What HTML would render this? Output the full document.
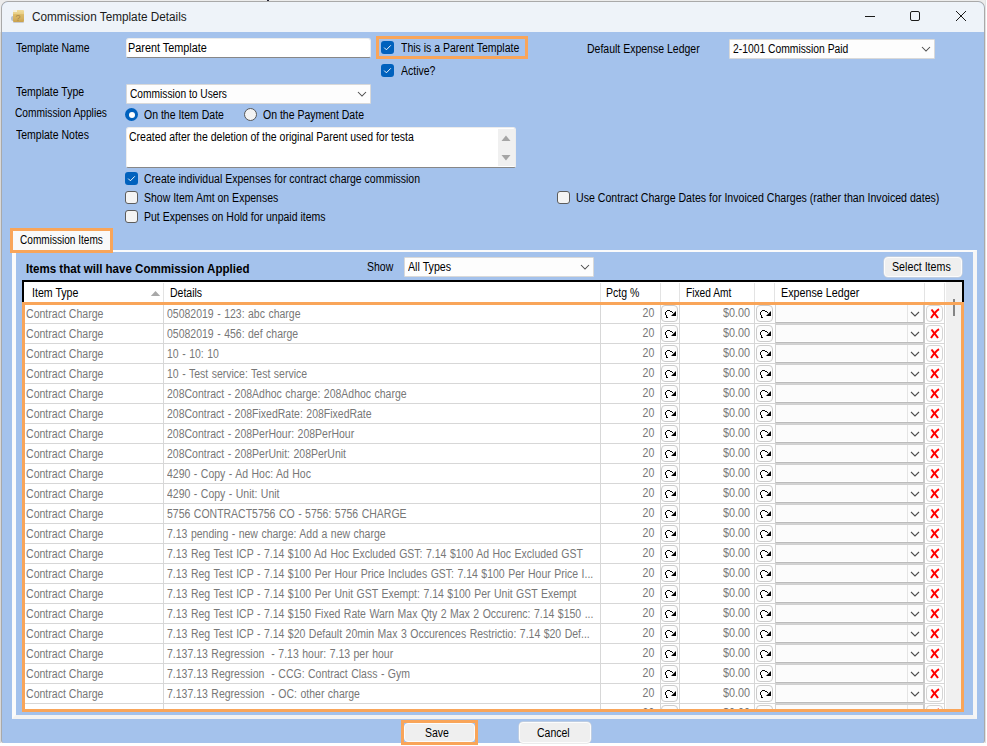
<!DOCTYPE html>
<html><head><meta charset="utf-8"><style>
html,body{margin:0;padding:0}
body{width:987px;height:746px;position:relative;overflow:hidden;background:#ececec;font-family:"Liberation Sans",sans-serif}
.t{position:absolute;white-space:nowrap;transform-origin:left top}
</style></head><body>

<div style="position:absolute;left:0px;top:32px;width:1px;height:711px;box-sizing:border-box;background:#d9d9d9"></div>
<div style="position:absolute;left:985px;top:0px;width:1px;height:746px;box-sizing:border-box;background:#e2e2e2"></div>
<div style="position:absolute;left:986px;top:0px;width:1px;height:746px;box-sizing:border-box;background:#fff"></div>
<div style="position:absolute;left:0px;top:743px;width:987px;height:3px;box-sizing:border-box;background:#fff"></div>
<div style="position:absolute;left:1px;top:1px;width:984px;height:742px;box-sizing:border-box;border:1px solid #a9a9a9;border-bottom:none;border-radius:7px 7px 3px 3px;overflow:hidden;background:#a4c2ec">
<div style="position:absolute;left:0;top:0;width:982px;height:30px;background:#eef3f9"></div>
</div>
<div style="position:absolute;left:11px;top:16px;width:3px;height:5px;border-radius:2px 0 0 2px;background:#b9c2cf"></div>
<div style="position:absolute;left:13px;top:10px;width:11px;height:12px;border-radius:1px;background:linear-gradient(#f1dd9f 0,#e8cf86 33%,#dcbb68 38%,#d6b260 70%,#c9a24e 100%);box-shadow:0 1px 0 #c8ccd4"></div>
<div style="position:absolute;left:13px;top:10px;width:4px;height:2px;background:#f6f0dc"></div>
<div style="position:absolute;left:15.5px;top:13.5px;font-size:9px;line-height:9px;color:#a8884a;font-family:Liberation Sans">?</div>
<div class="t" style="left:32px;top:10.84px;font-size:12px;line-height:12px;color:#1b1b1b;font-weight:normal;transform:scaleX(0.98);">Commission Template Details</div>
<div style="position:absolute;left:267px;top:0px;width:2px;height:1px;box-sizing:border-box;background:#223"></div>
<div style="position:absolute;left:865px;top:16px;width:10px;height:1px;box-sizing:border-box;background:#1a1a1a"></div>
<div style="position:absolute;left:910px;top:11px;width:10px;height:10px;box-sizing:border-box;border:1px solid #1a1a1a;border-radius:2px"></div>
<svg style="position:absolute;left:955px;top:10px" width="12" height="12" viewBox="0 0 12 12"><path d="M1 1 L11 11 M11 1 L1 11" stroke="#1a1a1a" stroke-width="1"/></svg>
<div class="t" style="left:16px;top:41.84px;font-size:12px;line-height:12px;color:#000;font-weight:normal;transform:scaleX(0.875);">Template Name</div>
<div style="position:absolute;left:126px;top:38px;width:245px;height:20px;box-sizing:border-box;background:#fff;border:1px solid #ececec;border-bottom:1px solid #878787;border-radius:3px 3px 2px 2px"></div>
<div class="t" style="left:128px;top:41.84px;font-size:12px;line-height:12px;color:#000;font-weight:normal;transform:scaleX(0.905);">Parent Template</div>
<div style="position:absolute;left:376px;top:36px;width:152px;height:23px;box-sizing:border-box;border:3px solid #f9a559"></div>
<div style="position:absolute;left:381px;top:41px;width:13px;height:13px;border-radius:3px;background:#0061bd"><svg width="13" height="13" viewBox="0 0 13 13" style="position:absolute;left:0;top:0"><path d="M3.2 6.6 L5.4 8.8 L9.8 4.3" fill="none" stroke="#fff" stroke-width="0.95"/></svg></div>
<div class="t" style="left:400.5px;top:41.84px;font-size:12px;line-height:12px;color:#000;font-weight:normal;transform:scaleX(0.875);">This is a Parent Template</div>
<div style="position:absolute;left:381px;top:64px;width:13px;height:13px;border-radius:3px;background:#0061bd"><svg width="13" height="13" viewBox="0 0 13 13" style="position:absolute;left:0;top:0"><path d="M3.2 6.6 L5.4 8.8 L9.8 4.3" fill="none" stroke="#fff" stroke-width="0.95"/></svg></div>
<div class="t" style="left:400.5px;top:64.84px;font-size:12px;line-height:12px;color:#000;font-weight:normal;transform:scaleX(0.875);">Active?</div>
<div class="t" style="left:586.8px;top:42.84px;font-size:12px;line-height:12px;color:#000;font-weight:normal;transform:scaleX(0.875);">Default Expense Ledger</div>
<div style="position:absolute;left:729px;top:39px;width:206px;height:20px;box-sizing:border-box;background:#fdfdfd;border:1px solid #d9d9d9;border-radius:1px"></div>
<div class="t" style="left:733px;top:42.84px;font-size:12px;line-height:12px;color:#000;font-weight:normal;transform:scaleX(0.86);">2-1001 Commission Paid</div>
<svg style="position:absolute;left:921px;top:46px" width="10" height="6" viewBox="0 0 10 6"><path d="M1 1 L5 5 L9 1" fill="none" stroke="#4a4a4a" stroke-width="1.05"/></svg>
<div class="t" style="left:16px;top:85.84px;font-size:12px;line-height:12px;color:#000;font-weight:normal;transform:scaleX(0.875);">Template Type</div>
<div style="position:absolute;left:126px;top:84px;width:245px;height:20px;box-sizing:border-box;background:#fdfdfd;border:1px solid #d9d9d9;border-radius:1px"></div>
<div class="t" style="left:129.5px;top:88.24px;font-size:12px;line-height:12px;color:#000;font-weight:normal;transform:scaleX(0.85);">Commission to Users</div>
<svg style="position:absolute;left:357px;top:91px" width="10" height="6" viewBox="0 0 10 6"><path d="M1 1 L5 5 L9 1" fill="none" stroke="#4a4a4a" stroke-width="1.05"/></svg>
<div class="t" style="left:15.3px;top:106.84px;font-size:12px;line-height:12px;color:#000;font-weight:normal;transform:scaleX(0.851);">Commission Applies</div>
<div style="position:absolute;left:125px;top:108px;width:13px;height:13px;border-radius:50%;background:#0061bd"></div>
<div style="position:absolute;left:128.5px;top:111.5px;width:6px;height:6px;border-radius:50%;background:#fff"></div>
<div class="t" style="left:143.5px;top:108.84px;font-size:12px;line-height:12px;color:#000;font-weight:normal;transform:scaleX(0.875);">On the Item Date</div>
<div style="position:absolute;left:244px;top:108px;width:13px;height:13px;box-sizing:border-box;border-radius:50%;background:#f3f3f3;border:1px solid #575757"></div>
<div class="t" style="left:262.5px;top:108.84px;font-size:12px;line-height:12px;color:#000;font-weight:normal;transform:scaleX(0.875);">On the Payment Date</div>
<div class="t" style="left:16px;top:128.84px;font-size:12px;line-height:12px;color:#000;font-weight:normal;transform:scaleX(0.875);">Template Notes</div>
<div style="position:absolute;left:126px;top:127px;width:390px;height:41px;box-sizing:border-box;background:#fff;border:1px solid #ececec;border-bottom:1px solid #878787;border-radius:3px 3px 2px 2px"></div>
<div class="t" style="left:129px;top:130.84px;font-size:12px;line-height:12px;color:#000;font-weight:normal;transform:scaleX(0.875);">Created after the deletion of the original Parent used for testa</div>
<div style="position:absolute;left:498px;top:129px;width:17px;height:37px;box-sizing:border-box;background:#f0f0f0"></div>
<svg style="position:absolute;left:501px;top:134px" width="10" height="8" viewBox="0 0 10 8"><path d="M0.5 7 L5 1.5 L9.5 7 Z" fill="#a5a5a5"/></svg>
<svg style="position:absolute;left:501px;top:154px" width="10" height="8" viewBox="0 0 10 8"><path d="M0.5 1 L5 6.5 L9.5 1 Z" fill="#a5a5a5"/></svg>
<div style="position:absolute;left:125px;top:172px;width:13px;height:13px;border-radius:3px;background:#0061bd"><svg width="13" height="13" viewBox="0 0 13 13" style="position:absolute;left:0;top:0"><path d="M3.2 6.6 L5.4 8.8 L9.8 4.3" fill="none" stroke="#fff" stroke-width="0.95"/></svg></div>
<div class="t" style="left:143.5px;top:172.84px;font-size:12px;line-height:12px;color:#000;font-weight:normal;transform:scaleX(0.875);">Create individual Expenses for contract charge commission</div>
<div style="position:absolute;left:125px;top:191px;width:13px;height:13px;box-sizing:border-box;border-radius:3px;background:#f4f4f4;border:1px solid #5c5c5c"></div>
<div class="t" style="left:143.5px;top:191.84px;font-size:12px;line-height:12px;color:#000;font-weight:normal;transform:scaleX(0.875);">Show Item Amt on Expenses</div>
<div style="position:absolute;left:125px;top:210px;width:13px;height:13px;box-sizing:border-box;border-radius:3px;background:#f4f4f4;border:1px solid #5c5c5c"></div>
<div class="t" style="left:143.5px;top:210.84px;font-size:12px;line-height:12px;color:#000;font-weight:normal;transform:scaleX(0.875);">Put Expenses on Hold for unpaid items</div>
<div style="position:absolute;left:557px;top:191px;width:13px;height:13px;box-sizing:border-box;border-radius:3px;background:#f4f4f4;border:1px solid #5c5c5c"></div>
<div class="t" style="left:576.3px;top:191.84px;font-size:12px;line-height:12px;color:#000;font-weight:normal;transform:scaleX(0.883);">Use Contract Charge Dates for Invoiced Charges (rather than Invoiced dates)</div>
<div style="position:absolute;left:12px;top:250px;width:965px;height:469px;box-sizing:border-box;border-top:2px solid #fbfbfb;border-left:4px solid #fbfbfb;border-right:4px solid #f6f6f6;border-bottom:4px solid #f3f3f3"></div>
<div style="position:absolute;left:10px;top:228px;width:103px;height:25px;box-sizing:border-box;background:#f9f9f9;border:3px solid #f9a559"></div>
<div class="t" style="left:19.5px;top:233.84px;font-size:12px;line-height:12px;color:#000;font-weight:normal;transform:scaleX(0.84);">Commission Items</div>
<div class="t" style="left:25.5px;top:262.84px;font-size:12px;line-height:12px;color:#000;font-weight:bold;transform:scaleX(0.962);">Items that will have Commission Applied</div>
<div class="t" style="left:367px;top:260.84px;font-size:12px;line-height:12px;color:#000;font-weight:normal;transform:scaleX(0.875);">Show</div>
<div style="position:absolute;left:404px;top:257px;width:190px;height:20px;box-sizing:border-box;background:#fdfdfd;border:1px solid #d9d9d9;border-radius:1px"></div>
<div class="t" style="left:408px;top:260.84px;font-size:12px;line-height:12px;color:#000;font-weight:normal;transform:scaleX(0.89);">All Types</div>
<svg style="position:absolute;left:580px;top:264px" width="10" height="6" viewBox="0 0 10 6"><path d="M1 1 L5 5 L9 1" fill="none" stroke="#4a4a4a" stroke-width="1.05"/></svg>
<div style="position:absolute;left:884px;top:257px;width:78px;height:20px;box-sizing:border-box;background:#efefef;border:1px solid #fcfcfc;box-shadow:0 0 0 0.5px #d8d8d8;border-radius:4px"></div>
<div class="t" style="left:892.2px;top:260.84px;font-size:12px;line-height:12px;color:#000;font-weight:normal;transform:scaleX(0.89);">Select Items</div>
<div style="position:absolute;left:22px;top:280px;width:942px;height:432px;box-sizing:border-box;background:#fff;border:2px solid #000;border-bottom:none"></div>
<div style="position:absolute;left:946px;top:282px;width:16px;height:428px;box-sizing:border-box;background:#f0f0f0"></div>
<div style="position:absolute;left:953px;top:299px;width:2px;height:17px;box-sizing:border-box;background:#858585"></div>
<div style="position:absolute;left:163px;top:283px;width:1px;height:19px;box-sizing:border-box;background:#e3e3e3"></div>
<div style="position:absolute;left:600px;top:283px;width:1px;height:19px;box-sizing:border-box;background:#e3e3e3"></div>
<div style="position:absolute;left:660px;top:283px;width:1px;height:19px;box-sizing:border-box;background:#e3e3e3"></div>
<div style="position:absolute;left:679px;top:283px;width:1px;height:19px;box-sizing:border-box;background:#e3e3e3"></div>
<div style="position:absolute;left:754px;top:283px;width:1px;height:19px;box-sizing:border-box;background:#e3e3e3"></div>
<div style="position:absolute;left:774px;top:283px;width:1px;height:19px;box-sizing:border-box;background:#e3e3e3"></div>
<div style="position:absolute;left:924px;top:283px;width:1px;height:19px;box-sizing:border-box;background:#e3e3e3"></div>
<div style="position:absolute;left:944px;top:283px;width:1px;height:19px;box-sizing:border-box;background:#e3e3e3"></div>
<div class="t" style="left:32.1px;top:286.84px;font-size:12px;line-height:12px;color:#000;font-weight:normal;transform:scaleX(0.885);">Item Type</div>
<svg style="position:absolute;left:150px;top:290px" width="11" height="7" viewBox="0 0 11 7"><path d="M0.8 6 L5.5 1 L10.2 6 Z" fill="#a8a8a8"/></svg>
<div class="t" style="left:170px;top:286.84px;font-size:12px;line-height:12px;color:#000;font-weight:normal;transform:scaleX(0.875);">Details</div>
<div class="t" style="left:606.2px;top:286.84px;font-size:12px;line-height:12px;color:#000;font-weight:normal;transform:scaleX(0.875);">Pctg %</div>
<div class="t" style="left:686.3px;top:286.84px;font-size:12px;line-height:12px;color:#000;font-weight:normal;transform:scaleX(0.85);">Fixed Amt</div>
<div class="t" style="left:781.1px;top:286.84px;font-size:12px;line-height:12px;color:#000;font-weight:normal;transform:scaleX(0.895);">Expense Ledger</div>
<div style="position:absolute;left:0;top:0;width:987px;height:746px;clip-path:inset(302px 24px 37px 24px)">
<div style="position:absolute;left:24px;top:323px;width:921px;height:1px;box-sizing:border-box;background:#d7d7d7"></div>
<div style="position:absolute;left:163px;top:303px;width:1px;height:20px;box-sizing:border-box;background:#d7d7d7"></div>
<div style="position:absolute;left:600px;top:303px;width:1px;height:20px;box-sizing:border-box;background:#d7d7d7"></div>
<div style="position:absolute;left:660px;top:303px;width:1px;height:20px;box-sizing:border-box;background:#d7d7d7"></div>
<div style="position:absolute;left:679px;top:303px;width:1px;height:20px;box-sizing:border-box;background:#d7d7d7"></div>
<div style="position:absolute;left:754px;top:303px;width:1px;height:20px;box-sizing:border-box;background:#d7d7d7"></div>
<div style="position:absolute;left:944px;top:303px;width:1px;height:20px;box-sizing:border-box;background:#d7d7d7"></div>
<div style="position:absolute;left:775px;top:304px;width:150px;height:19px;box-sizing:border-box;background:#fcfcfc;border-top:1px solid #d0d0d0;border-bottom:1px solid #bcbcbc;border-left:1px solid #d4d4d4;border-right:2px solid #cbcbcb"></div>
<div style="position:absolute;left:776px;top:321px;width:147px;height:1px;box-sizing:border-box;background:#fff"></div>
<div style="position:absolute;left:775px;top:323px;width:150px;height:1px;box-sizing:border-box;background:#d3d3d3"></div>
<div style="position:absolute;left:907px;top:305px;width:1px;height:17px;box-sizing:border-box;background:#e4e4e4"></div>
<svg style="position:absolute;left:910px;top:311px" width="10" height="6" viewBox="0 0 10 6"><path d="M1 1 L5 5 L9 1" fill="none" stroke="#4e4e4e" stroke-width="1.1"/></svg>
<div class="t" style="left:26.3px;top:308.14px;font-size:12px;line-height:12px;color:#777777;font-weight:normal;transform:scaleX(0.88);">Contract Charge</div>
<div class="t" style="left:166.9px;top:308.14px;font-size:12px;line-height:12px;color:#777777;font-weight:normal;transform:scaleX(0.874);word-spacing:0.66px">05082019 - 123: abc charge</div>
<div class="t" style="right:332.20000000000005px;top:307.44px;font-size:12px;line-height:12px;color:#777777;font-weight:normal;transform:scaleX(0.88);transform-origin:right top;">20</div>
<div class="t" style="right:237px;top:307.44px;font-size:12px;line-height:12px;color:#777777;font-weight:normal;transform:scaleX(0.9);transform-origin:right top;">$0.00</div>
<div style="position:absolute;left:661px;top:305px;width:17px;height:17px;box-sizing:border-box;border:1px solid #cbcbcb;border-radius:4px;background:#fdfdfd"><div style="position:absolute;left:-1px;top:-1px;width:17px;height:17px"><svg width="17" height="17" viewBox="0 0 17 17" style="position:absolute;left:0;top:0" shape-rendering="crispEdges"><rect x="6" y="5" width="3" height="1"/><rect x="5" y="6" width="1" height="1"/><rect x="4" y="7" width="1" height="3"/><rect x="5" y="10" width="1" height="3"/><rect x="6" y="12" width="1" height="1"/><rect x="9" y="6" width="2" height="1"/><rect x="11" y="7" width="1" height="1"/><polygon points="10,11 15,11 15,6" shape-rendering="auto"/></svg></div></div>
<div style="position:absolute;left:756px;top:305px;width:17px;height:17px;box-sizing:border-box;border:1px solid #cbcbcb;border-radius:4px;background:#fdfdfd"><div style="position:absolute;left:-1px;top:-1px;width:17px;height:17px"><svg width="17" height="17" viewBox="0 0 17 17" style="position:absolute;left:0;top:0" shape-rendering="crispEdges"><rect x="6" y="5" width="3" height="1"/><rect x="5" y="6" width="1" height="1"/><rect x="4" y="7" width="1" height="3"/><rect x="5" y="10" width="1" height="3"/><rect x="6" y="12" width="1" height="1"/><rect x="9" y="6" width="2" height="1"/><rect x="11" y="7" width="1" height="1"/><polygon points="10,11 15,11 15,6" shape-rendering="auto"/></svg></div></div>
<div style="position:absolute;left:926px;top:305px;width:17px;height:17px;box-sizing:border-box;border:1px solid #d4d4d4;border-radius:4px;background:#fdfdfd"><svg width="17" height="17" viewBox="0 0 17 17" style="position:absolute;left:-1px;top:-1px"><path d="M5 13 C7 10 10 6 13 4.2" fill="none" stroke="#f00" stroke-width="2"/><path d="M5.5 4.5 C7.5 7 10 10 12 13" fill="none" stroke="#f00" stroke-width="2"/></svg></div>
<div style="position:absolute;left:24px;top:343px;width:921px;height:1px;box-sizing:border-box;background:#d7d7d7"></div>
<div style="position:absolute;left:163px;top:323px;width:1px;height:20px;box-sizing:border-box;background:#d7d7d7"></div>
<div style="position:absolute;left:600px;top:323px;width:1px;height:20px;box-sizing:border-box;background:#d7d7d7"></div>
<div style="position:absolute;left:660px;top:323px;width:1px;height:20px;box-sizing:border-box;background:#d7d7d7"></div>
<div style="position:absolute;left:679px;top:323px;width:1px;height:20px;box-sizing:border-box;background:#d7d7d7"></div>
<div style="position:absolute;left:754px;top:323px;width:1px;height:20px;box-sizing:border-box;background:#d7d7d7"></div>
<div style="position:absolute;left:944px;top:323px;width:1px;height:20px;box-sizing:border-box;background:#d7d7d7"></div>
<div style="position:absolute;left:775px;top:324px;width:150px;height:19px;box-sizing:border-box;background:#fcfcfc;border-top:1px solid #d0d0d0;border-bottom:1px solid #bcbcbc;border-left:1px solid #d4d4d4;border-right:2px solid #cbcbcb"></div>
<div style="position:absolute;left:776px;top:341px;width:147px;height:1px;box-sizing:border-box;background:#fff"></div>
<div style="position:absolute;left:775px;top:343px;width:150px;height:1px;box-sizing:border-box;background:#d3d3d3"></div>
<div style="position:absolute;left:907px;top:325px;width:1px;height:17px;box-sizing:border-box;background:#e4e4e4"></div>
<svg style="position:absolute;left:910px;top:331px" width="10" height="6" viewBox="0 0 10 6"><path d="M1 1 L5 5 L9 1" fill="none" stroke="#4e4e4e" stroke-width="1.1"/></svg>
<div class="t" style="left:26.3px;top:328.14px;font-size:12px;line-height:12px;color:#777777;font-weight:normal;transform:scaleX(0.88);">Contract Charge</div>
<div class="t" style="left:166.9px;top:328.14px;font-size:12px;line-height:12px;color:#777777;font-weight:normal;transform:scaleX(0.874);word-spacing:0.66px">05082019 - 456: def charge</div>
<div class="t" style="right:332.20000000000005px;top:327.44px;font-size:12px;line-height:12px;color:#777777;font-weight:normal;transform:scaleX(0.88);transform-origin:right top;">20</div>
<div class="t" style="right:237px;top:327.44px;font-size:12px;line-height:12px;color:#777777;font-weight:normal;transform:scaleX(0.9);transform-origin:right top;">$0.00</div>
<div style="position:absolute;left:661px;top:325px;width:17px;height:17px;box-sizing:border-box;border:1px solid #cbcbcb;border-radius:4px;background:#fdfdfd"><div style="position:absolute;left:-1px;top:-1px;width:17px;height:17px"><svg width="17" height="17" viewBox="0 0 17 17" style="position:absolute;left:0;top:0" shape-rendering="crispEdges"><rect x="6" y="5" width="3" height="1"/><rect x="5" y="6" width="1" height="1"/><rect x="4" y="7" width="1" height="3"/><rect x="5" y="10" width="1" height="3"/><rect x="6" y="12" width="1" height="1"/><rect x="9" y="6" width="2" height="1"/><rect x="11" y="7" width="1" height="1"/><polygon points="10,11 15,11 15,6" shape-rendering="auto"/></svg></div></div>
<div style="position:absolute;left:756px;top:325px;width:17px;height:17px;box-sizing:border-box;border:1px solid #cbcbcb;border-radius:4px;background:#fdfdfd"><div style="position:absolute;left:-1px;top:-1px;width:17px;height:17px"><svg width="17" height="17" viewBox="0 0 17 17" style="position:absolute;left:0;top:0" shape-rendering="crispEdges"><rect x="6" y="5" width="3" height="1"/><rect x="5" y="6" width="1" height="1"/><rect x="4" y="7" width="1" height="3"/><rect x="5" y="10" width="1" height="3"/><rect x="6" y="12" width="1" height="1"/><rect x="9" y="6" width="2" height="1"/><rect x="11" y="7" width="1" height="1"/><polygon points="10,11 15,11 15,6" shape-rendering="auto"/></svg></div></div>
<div style="position:absolute;left:926px;top:325px;width:17px;height:17px;box-sizing:border-box;border:1px solid #d4d4d4;border-radius:4px;background:#fdfdfd"><svg width="17" height="17" viewBox="0 0 17 17" style="position:absolute;left:-1px;top:-1px"><path d="M5 13 C7 10 10 6 13 4.2" fill="none" stroke="#f00" stroke-width="2"/><path d="M5.5 4.5 C7.5 7 10 10 12 13" fill="none" stroke="#f00" stroke-width="2"/></svg></div>
<div style="position:absolute;left:24px;top:363px;width:921px;height:1px;box-sizing:border-box;background:#d7d7d7"></div>
<div style="position:absolute;left:163px;top:343px;width:1px;height:20px;box-sizing:border-box;background:#d7d7d7"></div>
<div style="position:absolute;left:600px;top:343px;width:1px;height:20px;box-sizing:border-box;background:#d7d7d7"></div>
<div style="position:absolute;left:660px;top:343px;width:1px;height:20px;box-sizing:border-box;background:#d7d7d7"></div>
<div style="position:absolute;left:679px;top:343px;width:1px;height:20px;box-sizing:border-box;background:#d7d7d7"></div>
<div style="position:absolute;left:754px;top:343px;width:1px;height:20px;box-sizing:border-box;background:#d7d7d7"></div>
<div style="position:absolute;left:944px;top:343px;width:1px;height:20px;box-sizing:border-box;background:#d7d7d7"></div>
<div style="position:absolute;left:775px;top:344px;width:150px;height:19px;box-sizing:border-box;background:#fcfcfc;border-top:1px solid #d0d0d0;border-bottom:1px solid #bcbcbc;border-left:1px solid #d4d4d4;border-right:2px solid #cbcbcb"></div>
<div style="position:absolute;left:776px;top:361px;width:147px;height:1px;box-sizing:border-box;background:#fff"></div>
<div style="position:absolute;left:775px;top:363px;width:150px;height:1px;box-sizing:border-box;background:#d3d3d3"></div>
<div style="position:absolute;left:907px;top:345px;width:1px;height:17px;box-sizing:border-box;background:#e4e4e4"></div>
<svg style="position:absolute;left:910px;top:351px" width="10" height="6" viewBox="0 0 10 6"><path d="M1 1 L5 5 L9 1" fill="none" stroke="#4e4e4e" stroke-width="1.1"/></svg>
<div class="t" style="left:26.3px;top:348.14px;font-size:12px;line-height:12px;color:#777777;font-weight:normal;transform:scaleX(0.88);">Contract Charge</div>
<div class="t" style="left:166.9px;top:348.14px;font-size:12px;line-height:12px;color:#777777;font-weight:normal;transform:scaleX(0.874);word-spacing:0.66px">10 - 10: 10</div>
<div class="t" style="right:332.20000000000005px;top:347.44px;font-size:12px;line-height:12px;color:#777777;font-weight:normal;transform:scaleX(0.88);transform-origin:right top;">20</div>
<div class="t" style="right:237px;top:347.44px;font-size:12px;line-height:12px;color:#777777;font-weight:normal;transform:scaleX(0.9);transform-origin:right top;">$0.00</div>
<div style="position:absolute;left:661px;top:345px;width:17px;height:17px;box-sizing:border-box;border:1px solid #cbcbcb;border-radius:4px;background:#fdfdfd"><div style="position:absolute;left:-1px;top:-1px;width:17px;height:17px"><svg width="17" height="17" viewBox="0 0 17 17" style="position:absolute;left:0;top:0" shape-rendering="crispEdges"><rect x="6" y="5" width="3" height="1"/><rect x="5" y="6" width="1" height="1"/><rect x="4" y="7" width="1" height="3"/><rect x="5" y="10" width="1" height="3"/><rect x="6" y="12" width="1" height="1"/><rect x="9" y="6" width="2" height="1"/><rect x="11" y="7" width="1" height="1"/><polygon points="10,11 15,11 15,6" shape-rendering="auto"/></svg></div></div>
<div style="position:absolute;left:756px;top:345px;width:17px;height:17px;box-sizing:border-box;border:1px solid #cbcbcb;border-radius:4px;background:#fdfdfd"><div style="position:absolute;left:-1px;top:-1px;width:17px;height:17px"><svg width="17" height="17" viewBox="0 0 17 17" style="position:absolute;left:0;top:0" shape-rendering="crispEdges"><rect x="6" y="5" width="3" height="1"/><rect x="5" y="6" width="1" height="1"/><rect x="4" y="7" width="1" height="3"/><rect x="5" y="10" width="1" height="3"/><rect x="6" y="12" width="1" height="1"/><rect x="9" y="6" width="2" height="1"/><rect x="11" y="7" width="1" height="1"/><polygon points="10,11 15,11 15,6" shape-rendering="auto"/></svg></div></div>
<div style="position:absolute;left:926px;top:345px;width:17px;height:17px;box-sizing:border-box;border:1px solid #d4d4d4;border-radius:4px;background:#fdfdfd"><svg width="17" height="17" viewBox="0 0 17 17" style="position:absolute;left:-1px;top:-1px"><path d="M5 13 C7 10 10 6 13 4.2" fill="none" stroke="#f00" stroke-width="2"/><path d="M5.5 4.5 C7.5 7 10 10 12 13" fill="none" stroke="#f00" stroke-width="2"/></svg></div>
<div style="position:absolute;left:24px;top:383px;width:921px;height:1px;box-sizing:border-box;background:#d7d7d7"></div>
<div style="position:absolute;left:163px;top:363px;width:1px;height:20px;box-sizing:border-box;background:#d7d7d7"></div>
<div style="position:absolute;left:600px;top:363px;width:1px;height:20px;box-sizing:border-box;background:#d7d7d7"></div>
<div style="position:absolute;left:660px;top:363px;width:1px;height:20px;box-sizing:border-box;background:#d7d7d7"></div>
<div style="position:absolute;left:679px;top:363px;width:1px;height:20px;box-sizing:border-box;background:#d7d7d7"></div>
<div style="position:absolute;left:754px;top:363px;width:1px;height:20px;box-sizing:border-box;background:#d7d7d7"></div>
<div style="position:absolute;left:944px;top:363px;width:1px;height:20px;box-sizing:border-box;background:#d7d7d7"></div>
<div style="position:absolute;left:775px;top:364px;width:150px;height:19px;box-sizing:border-box;background:#fcfcfc;border-top:1px solid #d0d0d0;border-bottom:1px solid #bcbcbc;border-left:1px solid #d4d4d4;border-right:2px solid #cbcbcb"></div>
<div style="position:absolute;left:776px;top:381px;width:147px;height:1px;box-sizing:border-box;background:#fff"></div>
<div style="position:absolute;left:775px;top:383px;width:150px;height:1px;box-sizing:border-box;background:#d3d3d3"></div>
<div style="position:absolute;left:907px;top:365px;width:1px;height:17px;box-sizing:border-box;background:#e4e4e4"></div>
<svg style="position:absolute;left:910px;top:371px" width="10" height="6" viewBox="0 0 10 6"><path d="M1 1 L5 5 L9 1" fill="none" stroke="#4e4e4e" stroke-width="1.1"/></svg>
<div class="t" style="left:26.3px;top:368.14px;font-size:12px;line-height:12px;color:#777777;font-weight:normal;transform:scaleX(0.88);">Contract Charge</div>
<div class="t" style="left:166.9px;top:368.14px;font-size:12px;line-height:12px;color:#777777;font-weight:normal;transform:scaleX(0.874);word-spacing:0.66px">10 - Test service: Test service</div>
<div class="t" style="right:332.20000000000005px;top:367.44px;font-size:12px;line-height:12px;color:#777777;font-weight:normal;transform:scaleX(0.88);transform-origin:right top;">20</div>
<div class="t" style="right:237px;top:367.44px;font-size:12px;line-height:12px;color:#777777;font-weight:normal;transform:scaleX(0.9);transform-origin:right top;">$0.00</div>
<div style="position:absolute;left:661px;top:365px;width:17px;height:17px;box-sizing:border-box;border:1px solid #cbcbcb;border-radius:4px;background:#fdfdfd"><div style="position:absolute;left:-1px;top:-1px;width:17px;height:17px"><svg width="17" height="17" viewBox="0 0 17 17" style="position:absolute;left:0;top:0" shape-rendering="crispEdges"><rect x="6" y="5" width="3" height="1"/><rect x="5" y="6" width="1" height="1"/><rect x="4" y="7" width="1" height="3"/><rect x="5" y="10" width="1" height="3"/><rect x="6" y="12" width="1" height="1"/><rect x="9" y="6" width="2" height="1"/><rect x="11" y="7" width="1" height="1"/><polygon points="10,11 15,11 15,6" shape-rendering="auto"/></svg></div></div>
<div style="position:absolute;left:756px;top:365px;width:17px;height:17px;box-sizing:border-box;border:1px solid #cbcbcb;border-radius:4px;background:#fdfdfd"><div style="position:absolute;left:-1px;top:-1px;width:17px;height:17px"><svg width="17" height="17" viewBox="0 0 17 17" style="position:absolute;left:0;top:0" shape-rendering="crispEdges"><rect x="6" y="5" width="3" height="1"/><rect x="5" y="6" width="1" height="1"/><rect x="4" y="7" width="1" height="3"/><rect x="5" y="10" width="1" height="3"/><rect x="6" y="12" width="1" height="1"/><rect x="9" y="6" width="2" height="1"/><rect x="11" y="7" width="1" height="1"/><polygon points="10,11 15,11 15,6" shape-rendering="auto"/></svg></div></div>
<div style="position:absolute;left:926px;top:365px;width:17px;height:17px;box-sizing:border-box;border:1px solid #d4d4d4;border-radius:4px;background:#fdfdfd"><svg width="17" height="17" viewBox="0 0 17 17" style="position:absolute;left:-1px;top:-1px"><path d="M5 13 C7 10 10 6 13 4.2" fill="none" stroke="#f00" stroke-width="2"/><path d="M5.5 4.5 C7.5 7 10 10 12 13" fill="none" stroke="#f00" stroke-width="2"/></svg></div>
<div style="position:absolute;left:24px;top:403px;width:921px;height:1px;box-sizing:border-box;background:#d7d7d7"></div>
<div style="position:absolute;left:163px;top:383px;width:1px;height:20px;box-sizing:border-box;background:#d7d7d7"></div>
<div style="position:absolute;left:600px;top:383px;width:1px;height:20px;box-sizing:border-box;background:#d7d7d7"></div>
<div style="position:absolute;left:660px;top:383px;width:1px;height:20px;box-sizing:border-box;background:#d7d7d7"></div>
<div style="position:absolute;left:679px;top:383px;width:1px;height:20px;box-sizing:border-box;background:#d7d7d7"></div>
<div style="position:absolute;left:754px;top:383px;width:1px;height:20px;box-sizing:border-box;background:#d7d7d7"></div>
<div style="position:absolute;left:944px;top:383px;width:1px;height:20px;box-sizing:border-box;background:#d7d7d7"></div>
<div style="position:absolute;left:775px;top:384px;width:150px;height:19px;box-sizing:border-box;background:#fcfcfc;border-top:1px solid #d0d0d0;border-bottom:1px solid #bcbcbc;border-left:1px solid #d4d4d4;border-right:2px solid #cbcbcb"></div>
<div style="position:absolute;left:776px;top:401px;width:147px;height:1px;box-sizing:border-box;background:#fff"></div>
<div style="position:absolute;left:775px;top:403px;width:150px;height:1px;box-sizing:border-box;background:#d3d3d3"></div>
<div style="position:absolute;left:907px;top:385px;width:1px;height:17px;box-sizing:border-box;background:#e4e4e4"></div>
<svg style="position:absolute;left:910px;top:391px" width="10" height="6" viewBox="0 0 10 6"><path d="M1 1 L5 5 L9 1" fill="none" stroke="#4e4e4e" stroke-width="1.1"/></svg>
<div class="t" style="left:26.3px;top:388.14px;font-size:12px;line-height:12px;color:#777777;font-weight:normal;transform:scaleX(0.88);">Contract Charge</div>
<div class="t" style="left:166.9px;top:388.14px;font-size:12px;line-height:12px;color:#777777;font-weight:normal;transform:scaleX(0.874);word-spacing:0.66px">208Contract - 208Adhoc charge: 208Adhoc charge</div>
<div class="t" style="right:332.20000000000005px;top:387.44px;font-size:12px;line-height:12px;color:#777777;font-weight:normal;transform:scaleX(0.88);transform-origin:right top;">20</div>
<div class="t" style="right:237px;top:387.44px;font-size:12px;line-height:12px;color:#777777;font-weight:normal;transform:scaleX(0.9);transform-origin:right top;">$0.00</div>
<div style="position:absolute;left:661px;top:385px;width:17px;height:17px;box-sizing:border-box;border:1px solid #cbcbcb;border-radius:4px;background:#fdfdfd"><div style="position:absolute;left:-1px;top:-1px;width:17px;height:17px"><svg width="17" height="17" viewBox="0 0 17 17" style="position:absolute;left:0;top:0" shape-rendering="crispEdges"><rect x="6" y="5" width="3" height="1"/><rect x="5" y="6" width="1" height="1"/><rect x="4" y="7" width="1" height="3"/><rect x="5" y="10" width="1" height="3"/><rect x="6" y="12" width="1" height="1"/><rect x="9" y="6" width="2" height="1"/><rect x="11" y="7" width="1" height="1"/><polygon points="10,11 15,11 15,6" shape-rendering="auto"/></svg></div></div>
<div style="position:absolute;left:756px;top:385px;width:17px;height:17px;box-sizing:border-box;border:1px solid #cbcbcb;border-radius:4px;background:#fdfdfd"><div style="position:absolute;left:-1px;top:-1px;width:17px;height:17px"><svg width="17" height="17" viewBox="0 0 17 17" style="position:absolute;left:0;top:0" shape-rendering="crispEdges"><rect x="6" y="5" width="3" height="1"/><rect x="5" y="6" width="1" height="1"/><rect x="4" y="7" width="1" height="3"/><rect x="5" y="10" width="1" height="3"/><rect x="6" y="12" width="1" height="1"/><rect x="9" y="6" width="2" height="1"/><rect x="11" y="7" width="1" height="1"/><polygon points="10,11 15,11 15,6" shape-rendering="auto"/></svg></div></div>
<div style="position:absolute;left:926px;top:385px;width:17px;height:17px;box-sizing:border-box;border:1px solid #d4d4d4;border-radius:4px;background:#fdfdfd"><svg width="17" height="17" viewBox="0 0 17 17" style="position:absolute;left:-1px;top:-1px"><path d="M5 13 C7 10 10 6 13 4.2" fill="none" stroke="#f00" stroke-width="2"/><path d="M5.5 4.5 C7.5 7 10 10 12 13" fill="none" stroke="#f00" stroke-width="2"/></svg></div>
<div style="position:absolute;left:24px;top:423px;width:921px;height:1px;box-sizing:border-box;background:#d7d7d7"></div>
<div style="position:absolute;left:163px;top:403px;width:1px;height:20px;box-sizing:border-box;background:#d7d7d7"></div>
<div style="position:absolute;left:600px;top:403px;width:1px;height:20px;box-sizing:border-box;background:#d7d7d7"></div>
<div style="position:absolute;left:660px;top:403px;width:1px;height:20px;box-sizing:border-box;background:#d7d7d7"></div>
<div style="position:absolute;left:679px;top:403px;width:1px;height:20px;box-sizing:border-box;background:#d7d7d7"></div>
<div style="position:absolute;left:754px;top:403px;width:1px;height:20px;box-sizing:border-box;background:#d7d7d7"></div>
<div style="position:absolute;left:944px;top:403px;width:1px;height:20px;box-sizing:border-box;background:#d7d7d7"></div>
<div style="position:absolute;left:775px;top:404px;width:150px;height:19px;box-sizing:border-box;background:#fcfcfc;border-top:1px solid #d0d0d0;border-bottom:1px solid #bcbcbc;border-left:1px solid #d4d4d4;border-right:2px solid #cbcbcb"></div>
<div style="position:absolute;left:776px;top:421px;width:147px;height:1px;box-sizing:border-box;background:#fff"></div>
<div style="position:absolute;left:775px;top:423px;width:150px;height:1px;box-sizing:border-box;background:#d3d3d3"></div>
<div style="position:absolute;left:907px;top:405px;width:1px;height:17px;box-sizing:border-box;background:#e4e4e4"></div>
<svg style="position:absolute;left:910px;top:411px" width="10" height="6" viewBox="0 0 10 6"><path d="M1 1 L5 5 L9 1" fill="none" stroke="#4e4e4e" stroke-width="1.1"/></svg>
<div class="t" style="left:26.3px;top:408.14px;font-size:12px;line-height:12px;color:#777777;font-weight:normal;transform:scaleX(0.88);">Contract Charge</div>
<div class="t" style="left:166.9px;top:408.14px;font-size:12px;line-height:12px;color:#777777;font-weight:normal;transform:scaleX(0.874);word-spacing:0.66px">208Contract - 208FixedRate: 208FixedRate</div>
<div class="t" style="right:332.20000000000005px;top:407.44px;font-size:12px;line-height:12px;color:#777777;font-weight:normal;transform:scaleX(0.88);transform-origin:right top;">20</div>
<div class="t" style="right:237px;top:407.44px;font-size:12px;line-height:12px;color:#777777;font-weight:normal;transform:scaleX(0.9);transform-origin:right top;">$0.00</div>
<div style="position:absolute;left:661px;top:405px;width:17px;height:17px;box-sizing:border-box;border:1px solid #cbcbcb;border-radius:4px;background:#fdfdfd"><div style="position:absolute;left:-1px;top:-1px;width:17px;height:17px"><svg width="17" height="17" viewBox="0 0 17 17" style="position:absolute;left:0;top:0" shape-rendering="crispEdges"><rect x="6" y="5" width="3" height="1"/><rect x="5" y="6" width="1" height="1"/><rect x="4" y="7" width="1" height="3"/><rect x="5" y="10" width="1" height="3"/><rect x="6" y="12" width="1" height="1"/><rect x="9" y="6" width="2" height="1"/><rect x="11" y="7" width="1" height="1"/><polygon points="10,11 15,11 15,6" shape-rendering="auto"/></svg></div></div>
<div style="position:absolute;left:756px;top:405px;width:17px;height:17px;box-sizing:border-box;border:1px solid #cbcbcb;border-radius:4px;background:#fdfdfd"><div style="position:absolute;left:-1px;top:-1px;width:17px;height:17px"><svg width="17" height="17" viewBox="0 0 17 17" style="position:absolute;left:0;top:0" shape-rendering="crispEdges"><rect x="6" y="5" width="3" height="1"/><rect x="5" y="6" width="1" height="1"/><rect x="4" y="7" width="1" height="3"/><rect x="5" y="10" width="1" height="3"/><rect x="6" y="12" width="1" height="1"/><rect x="9" y="6" width="2" height="1"/><rect x="11" y="7" width="1" height="1"/><polygon points="10,11 15,11 15,6" shape-rendering="auto"/></svg></div></div>
<div style="position:absolute;left:926px;top:405px;width:17px;height:17px;box-sizing:border-box;border:1px solid #d4d4d4;border-radius:4px;background:#fdfdfd"><svg width="17" height="17" viewBox="0 0 17 17" style="position:absolute;left:-1px;top:-1px"><path d="M5 13 C7 10 10 6 13 4.2" fill="none" stroke="#f00" stroke-width="2"/><path d="M5.5 4.5 C7.5 7 10 10 12 13" fill="none" stroke="#f00" stroke-width="2"/></svg></div>
<div style="position:absolute;left:24px;top:443px;width:921px;height:1px;box-sizing:border-box;background:#d7d7d7"></div>
<div style="position:absolute;left:163px;top:423px;width:1px;height:20px;box-sizing:border-box;background:#d7d7d7"></div>
<div style="position:absolute;left:600px;top:423px;width:1px;height:20px;box-sizing:border-box;background:#d7d7d7"></div>
<div style="position:absolute;left:660px;top:423px;width:1px;height:20px;box-sizing:border-box;background:#d7d7d7"></div>
<div style="position:absolute;left:679px;top:423px;width:1px;height:20px;box-sizing:border-box;background:#d7d7d7"></div>
<div style="position:absolute;left:754px;top:423px;width:1px;height:20px;box-sizing:border-box;background:#d7d7d7"></div>
<div style="position:absolute;left:944px;top:423px;width:1px;height:20px;box-sizing:border-box;background:#d7d7d7"></div>
<div style="position:absolute;left:775px;top:424px;width:150px;height:19px;box-sizing:border-box;background:#fcfcfc;border-top:1px solid #d0d0d0;border-bottom:1px solid #bcbcbc;border-left:1px solid #d4d4d4;border-right:2px solid #cbcbcb"></div>
<div style="position:absolute;left:776px;top:441px;width:147px;height:1px;box-sizing:border-box;background:#fff"></div>
<div style="position:absolute;left:775px;top:443px;width:150px;height:1px;box-sizing:border-box;background:#d3d3d3"></div>
<div style="position:absolute;left:907px;top:425px;width:1px;height:17px;box-sizing:border-box;background:#e4e4e4"></div>
<svg style="position:absolute;left:910px;top:431px" width="10" height="6" viewBox="0 0 10 6"><path d="M1 1 L5 5 L9 1" fill="none" stroke="#4e4e4e" stroke-width="1.1"/></svg>
<div class="t" style="left:26.3px;top:428.14px;font-size:12px;line-height:12px;color:#777777;font-weight:normal;transform:scaleX(0.88);">Contract Charge</div>
<div class="t" style="left:166.9px;top:428.14px;font-size:12px;line-height:12px;color:#777777;font-weight:normal;transform:scaleX(0.874);word-spacing:0.66px">208Contract - 208PerHour: 208PerHour</div>
<div class="t" style="right:332.20000000000005px;top:427.44px;font-size:12px;line-height:12px;color:#777777;font-weight:normal;transform:scaleX(0.88);transform-origin:right top;">20</div>
<div class="t" style="right:237px;top:427.44px;font-size:12px;line-height:12px;color:#777777;font-weight:normal;transform:scaleX(0.9);transform-origin:right top;">$0.00</div>
<div style="position:absolute;left:661px;top:425px;width:17px;height:17px;box-sizing:border-box;border:1px solid #cbcbcb;border-radius:4px;background:#fdfdfd"><div style="position:absolute;left:-1px;top:-1px;width:17px;height:17px"><svg width="17" height="17" viewBox="0 0 17 17" style="position:absolute;left:0;top:0" shape-rendering="crispEdges"><rect x="6" y="5" width="3" height="1"/><rect x="5" y="6" width="1" height="1"/><rect x="4" y="7" width="1" height="3"/><rect x="5" y="10" width="1" height="3"/><rect x="6" y="12" width="1" height="1"/><rect x="9" y="6" width="2" height="1"/><rect x="11" y="7" width="1" height="1"/><polygon points="10,11 15,11 15,6" shape-rendering="auto"/></svg></div></div>
<div style="position:absolute;left:756px;top:425px;width:17px;height:17px;box-sizing:border-box;border:1px solid #cbcbcb;border-radius:4px;background:#fdfdfd"><div style="position:absolute;left:-1px;top:-1px;width:17px;height:17px"><svg width="17" height="17" viewBox="0 0 17 17" style="position:absolute;left:0;top:0" shape-rendering="crispEdges"><rect x="6" y="5" width="3" height="1"/><rect x="5" y="6" width="1" height="1"/><rect x="4" y="7" width="1" height="3"/><rect x="5" y="10" width="1" height="3"/><rect x="6" y="12" width="1" height="1"/><rect x="9" y="6" width="2" height="1"/><rect x="11" y="7" width="1" height="1"/><polygon points="10,11 15,11 15,6" shape-rendering="auto"/></svg></div></div>
<div style="position:absolute;left:926px;top:425px;width:17px;height:17px;box-sizing:border-box;border:1px solid #d4d4d4;border-radius:4px;background:#fdfdfd"><svg width="17" height="17" viewBox="0 0 17 17" style="position:absolute;left:-1px;top:-1px"><path d="M5 13 C7 10 10 6 13 4.2" fill="none" stroke="#f00" stroke-width="2"/><path d="M5.5 4.5 C7.5 7 10 10 12 13" fill="none" stroke="#f00" stroke-width="2"/></svg></div>
<div style="position:absolute;left:24px;top:463px;width:921px;height:1px;box-sizing:border-box;background:#d7d7d7"></div>
<div style="position:absolute;left:163px;top:443px;width:1px;height:20px;box-sizing:border-box;background:#d7d7d7"></div>
<div style="position:absolute;left:600px;top:443px;width:1px;height:20px;box-sizing:border-box;background:#d7d7d7"></div>
<div style="position:absolute;left:660px;top:443px;width:1px;height:20px;box-sizing:border-box;background:#d7d7d7"></div>
<div style="position:absolute;left:679px;top:443px;width:1px;height:20px;box-sizing:border-box;background:#d7d7d7"></div>
<div style="position:absolute;left:754px;top:443px;width:1px;height:20px;box-sizing:border-box;background:#d7d7d7"></div>
<div style="position:absolute;left:944px;top:443px;width:1px;height:20px;box-sizing:border-box;background:#d7d7d7"></div>
<div style="position:absolute;left:775px;top:444px;width:150px;height:19px;box-sizing:border-box;background:#fcfcfc;border-top:1px solid #d0d0d0;border-bottom:1px solid #bcbcbc;border-left:1px solid #d4d4d4;border-right:2px solid #cbcbcb"></div>
<div style="position:absolute;left:776px;top:461px;width:147px;height:1px;box-sizing:border-box;background:#fff"></div>
<div style="position:absolute;left:775px;top:463px;width:150px;height:1px;box-sizing:border-box;background:#d3d3d3"></div>
<div style="position:absolute;left:907px;top:445px;width:1px;height:17px;box-sizing:border-box;background:#e4e4e4"></div>
<svg style="position:absolute;left:910px;top:451px" width="10" height="6" viewBox="0 0 10 6"><path d="M1 1 L5 5 L9 1" fill="none" stroke="#4e4e4e" stroke-width="1.1"/></svg>
<div class="t" style="left:26.3px;top:448.14px;font-size:12px;line-height:12px;color:#777777;font-weight:normal;transform:scaleX(0.88);">Contract Charge</div>
<div class="t" style="left:166.9px;top:448.14px;font-size:12px;line-height:12px;color:#777777;font-weight:normal;transform:scaleX(0.874);word-spacing:0.66px">208Contract - 208PerUnit: 208PerUnit</div>
<div class="t" style="right:332.20000000000005px;top:447.44px;font-size:12px;line-height:12px;color:#777777;font-weight:normal;transform:scaleX(0.88);transform-origin:right top;">20</div>
<div class="t" style="right:237px;top:447.44px;font-size:12px;line-height:12px;color:#777777;font-weight:normal;transform:scaleX(0.9);transform-origin:right top;">$0.00</div>
<div style="position:absolute;left:661px;top:445px;width:17px;height:17px;box-sizing:border-box;border:1px solid #cbcbcb;border-radius:4px;background:#fdfdfd"><div style="position:absolute;left:-1px;top:-1px;width:17px;height:17px"><svg width="17" height="17" viewBox="0 0 17 17" style="position:absolute;left:0;top:0" shape-rendering="crispEdges"><rect x="6" y="5" width="3" height="1"/><rect x="5" y="6" width="1" height="1"/><rect x="4" y="7" width="1" height="3"/><rect x="5" y="10" width="1" height="3"/><rect x="6" y="12" width="1" height="1"/><rect x="9" y="6" width="2" height="1"/><rect x="11" y="7" width="1" height="1"/><polygon points="10,11 15,11 15,6" shape-rendering="auto"/></svg></div></div>
<div style="position:absolute;left:756px;top:445px;width:17px;height:17px;box-sizing:border-box;border:1px solid #cbcbcb;border-radius:4px;background:#fdfdfd"><div style="position:absolute;left:-1px;top:-1px;width:17px;height:17px"><svg width="17" height="17" viewBox="0 0 17 17" style="position:absolute;left:0;top:0" shape-rendering="crispEdges"><rect x="6" y="5" width="3" height="1"/><rect x="5" y="6" width="1" height="1"/><rect x="4" y="7" width="1" height="3"/><rect x="5" y="10" width="1" height="3"/><rect x="6" y="12" width="1" height="1"/><rect x="9" y="6" width="2" height="1"/><rect x="11" y="7" width="1" height="1"/><polygon points="10,11 15,11 15,6" shape-rendering="auto"/></svg></div></div>
<div style="position:absolute;left:926px;top:445px;width:17px;height:17px;box-sizing:border-box;border:1px solid #d4d4d4;border-radius:4px;background:#fdfdfd"><svg width="17" height="17" viewBox="0 0 17 17" style="position:absolute;left:-1px;top:-1px"><path d="M5 13 C7 10 10 6 13 4.2" fill="none" stroke="#f00" stroke-width="2"/><path d="M5.5 4.5 C7.5 7 10 10 12 13" fill="none" stroke="#f00" stroke-width="2"/></svg></div>
<div style="position:absolute;left:24px;top:483px;width:921px;height:1px;box-sizing:border-box;background:#d7d7d7"></div>
<div style="position:absolute;left:163px;top:463px;width:1px;height:20px;box-sizing:border-box;background:#d7d7d7"></div>
<div style="position:absolute;left:600px;top:463px;width:1px;height:20px;box-sizing:border-box;background:#d7d7d7"></div>
<div style="position:absolute;left:660px;top:463px;width:1px;height:20px;box-sizing:border-box;background:#d7d7d7"></div>
<div style="position:absolute;left:679px;top:463px;width:1px;height:20px;box-sizing:border-box;background:#d7d7d7"></div>
<div style="position:absolute;left:754px;top:463px;width:1px;height:20px;box-sizing:border-box;background:#d7d7d7"></div>
<div style="position:absolute;left:944px;top:463px;width:1px;height:20px;box-sizing:border-box;background:#d7d7d7"></div>
<div style="position:absolute;left:775px;top:464px;width:150px;height:19px;box-sizing:border-box;background:#fcfcfc;border-top:1px solid #d0d0d0;border-bottom:1px solid #bcbcbc;border-left:1px solid #d4d4d4;border-right:2px solid #cbcbcb"></div>
<div style="position:absolute;left:776px;top:481px;width:147px;height:1px;box-sizing:border-box;background:#fff"></div>
<div style="position:absolute;left:775px;top:483px;width:150px;height:1px;box-sizing:border-box;background:#d3d3d3"></div>
<div style="position:absolute;left:907px;top:465px;width:1px;height:17px;box-sizing:border-box;background:#e4e4e4"></div>
<svg style="position:absolute;left:910px;top:471px" width="10" height="6" viewBox="0 0 10 6"><path d="M1 1 L5 5 L9 1" fill="none" stroke="#4e4e4e" stroke-width="1.1"/></svg>
<div class="t" style="left:26.3px;top:468.14px;font-size:12px;line-height:12px;color:#777777;font-weight:normal;transform:scaleX(0.88);">Contract Charge</div>
<div class="t" style="left:166.9px;top:468.14px;font-size:12px;line-height:12px;color:#777777;font-weight:normal;transform:scaleX(0.874);word-spacing:0.66px">4290 - Copy - Ad Hoc: Ad Hoc</div>
<div class="t" style="right:332.20000000000005px;top:467.44px;font-size:12px;line-height:12px;color:#777777;font-weight:normal;transform:scaleX(0.88);transform-origin:right top;">20</div>
<div class="t" style="right:237px;top:467.44px;font-size:12px;line-height:12px;color:#777777;font-weight:normal;transform:scaleX(0.9);transform-origin:right top;">$0.00</div>
<div style="position:absolute;left:661px;top:465px;width:17px;height:17px;box-sizing:border-box;border:1px solid #cbcbcb;border-radius:4px;background:#fdfdfd"><div style="position:absolute;left:-1px;top:-1px;width:17px;height:17px"><svg width="17" height="17" viewBox="0 0 17 17" style="position:absolute;left:0;top:0" shape-rendering="crispEdges"><rect x="6" y="5" width="3" height="1"/><rect x="5" y="6" width="1" height="1"/><rect x="4" y="7" width="1" height="3"/><rect x="5" y="10" width="1" height="3"/><rect x="6" y="12" width="1" height="1"/><rect x="9" y="6" width="2" height="1"/><rect x="11" y="7" width="1" height="1"/><polygon points="10,11 15,11 15,6" shape-rendering="auto"/></svg></div></div>
<div style="position:absolute;left:756px;top:465px;width:17px;height:17px;box-sizing:border-box;border:1px solid #cbcbcb;border-radius:4px;background:#fdfdfd"><div style="position:absolute;left:-1px;top:-1px;width:17px;height:17px"><svg width="17" height="17" viewBox="0 0 17 17" style="position:absolute;left:0;top:0" shape-rendering="crispEdges"><rect x="6" y="5" width="3" height="1"/><rect x="5" y="6" width="1" height="1"/><rect x="4" y="7" width="1" height="3"/><rect x="5" y="10" width="1" height="3"/><rect x="6" y="12" width="1" height="1"/><rect x="9" y="6" width="2" height="1"/><rect x="11" y="7" width="1" height="1"/><polygon points="10,11 15,11 15,6" shape-rendering="auto"/></svg></div></div>
<div style="position:absolute;left:926px;top:465px;width:17px;height:17px;box-sizing:border-box;border:1px solid #d4d4d4;border-radius:4px;background:#fdfdfd"><svg width="17" height="17" viewBox="0 0 17 17" style="position:absolute;left:-1px;top:-1px"><path d="M5 13 C7 10 10 6 13 4.2" fill="none" stroke="#f00" stroke-width="2"/><path d="M5.5 4.5 C7.5 7 10 10 12 13" fill="none" stroke="#f00" stroke-width="2"/></svg></div>
<div style="position:absolute;left:24px;top:503px;width:921px;height:1px;box-sizing:border-box;background:#d7d7d7"></div>
<div style="position:absolute;left:163px;top:483px;width:1px;height:20px;box-sizing:border-box;background:#d7d7d7"></div>
<div style="position:absolute;left:600px;top:483px;width:1px;height:20px;box-sizing:border-box;background:#d7d7d7"></div>
<div style="position:absolute;left:660px;top:483px;width:1px;height:20px;box-sizing:border-box;background:#d7d7d7"></div>
<div style="position:absolute;left:679px;top:483px;width:1px;height:20px;box-sizing:border-box;background:#d7d7d7"></div>
<div style="position:absolute;left:754px;top:483px;width:1px;height:20px;box-sizing:border-box;background:#d7d7d7"></div>
<div style="position:absolute;left:944px;top:483px;width:1px;height:20px;box-sizing:border-box;background:#d7d7d7"></div>
<div style="position:absolute;left:775px;top:484px;width:150px;height:19px;box-sizing:border-box;background:#fcfcfc;border-top:1px solid #d0d0d0;border-bottom:1px solid #bcbcbc;border-left:1px solid #d4d4d4;border-right:2px solid #cbcbcb"></div>
<div style="position:absolute;left:776px;top:501px;width:147px;height:1px;box-sizing:border-box;background:#fff"></div>
<div style="position:absolute;left:775px;top:503px;width:150px;height:1px;box-sizing:border-box;background:#d3d3d3"></div>
<div style="position:absolute;left:907px;top:485px;width:1px;height:17px;box-sizing:border-box;background:#e4e4e4"></div>
<svg style="position:absolute;left:910px;top:491px" width="10" height="6" viewBox="0 0 10 6"><path d="M1 1 L5 5 L9 1" fill="none" stroke="#4e4e4e" stroke-width="1.1"/></svg>
<div class="t" style="left:26.3px;top:488.14px;font-size:12px;line-height:12px;color:#777777;font-weight:normal;transform:scaleX(0.88);">Contract Charge</div>
<div class="t" style="left:166.9px;top:488.14px;font-size:12px;line-height:12px;color:#777777;font-weight:normal;transform:scaleX(0.874);word-spacing:0.66px">4290 - Copy - Unit: Unit</div>
<div class="t" style="right:332.20000000000005px;top:487.44px;font-size:12px;line-height:12px;color:#777777;font-weight:normal;transform:scaleX(0.88);transform-origin:right top;">20</div>
<div class="t" style="right:237px;top:487.44px;font-size:12px;line-height:12px;color:#777777;font-weight:normal;transform:scaleX(0.9);transform-origin:right top;">$0.00</div>
<div style="position:absolute;left:661px;top:485px;width:17px;height:17px;box-sizing:border-box;border:1px solid #cbcbcb;border-radius:4px;background:#fdfdfd"><div style="position:absolute;left:-1px;top:-1px;width:17px;height:17px"><svg width="17" height="17" viewBox="0 0 17 17" style="position:absolute;left:0;top:0" shape-rendering="crispEdges"><rect x="6" y="5" width="3" height="1"/><rect x="5" y="6" width="1" height="1"/><rect x="4" y="7" width="1" height="3"/><rect x="5" y="10" width="1" height="3"/><rect x="6" y="12" width="1" height="1"/><rect x="9" y="6" width="2" height="1"/><rect x="11" y="7" width="1" height="1"/><polygon points="10,11 15,11 15,6" shape-rendering="auto"/></svg></div></div>
<div style="position:absolute;left:756px;top:485px;width:17px;height:17px;box-sizing:border-box;border:1px solid #cbcbcb;border-radius:4px;background:#fdfdfd"><div style="position:absolute;left:-1px;top:-1px;width:17px;height:17px"><svg width="17" height="17" viewBox="0 0 17 17" style="position:absolute;left:0;top:0" shape-rendering="crispEdges"><rect x="6" y="5" width="3" height="1"/><rect x="5" y="6" width="1" height="1"/><rect x="4" y="7" width="1" height="3"/><rect x="5" y="10" width="1" height="3"/><rect x="6" y="12" width="1" height="1"/><rect x="9" y="6" width="2" height="1"/><rect x="11" y="7" width="1" height="1"/><polygon points="10,11 15,11 15,6" shape-rendering="auto"/></svg></div></div>
<div style="position:absolute;left:926px;top:485px;width:17px;height:17px;box-sizing:border-box;border:1px solid #d4d4d4;border-radius:4px;background:#fdfdfd"><svg width="17" height="17" viewBox="0 0 17 17" style="position:absolute;left:-1px;top:-1px"><path d="M5 13 C7 10 10 6 13 4.2" fill="none" stroke="#f00" stroke-width="2"/><path d="M5.5 4.5 C7.5 7 10 10 12 13" fill="none" stroke="#f00" stroke-width="2"/></svg></div>
<div style="position:absolute;left:24px;top:523px;width:921px;height:1px;box-sizing:border-box;background:#d7d7d7"></div>
<div style="position:absolute;left:163px;top:503px;width:1px;height:20px;box-sizing:border-box;background:#d7d7d7"></div>
<div style="position:absolute;left:600px;top:503px;width:1px;height:20px;box-sizing:border-box;background:#d7d7d7"></div>
<div style="position:absolute;left:660px;top:503px;width:1px;height:20px;box-sizing:border-box;background:#d7d7d7"></div>
<div style="position:absolute;left:679px;top:503px;width:1px;height:20px;box-sizing:border-box;background:#d7d7d7"></div>
<div style="position:absolute;left:754px;top:503px;width:1px;height:20px;box-sizing:border-box;background:#d7d7d7"></div>
<div style="position:absolute;left:944px;top:503px;width:1px;height:20px;box-sizing:border-box;background:#d7d7d7"></div>
<div style="position:absolute;left:775px;top:504px;width:150px;height:19px;box-sizing:border-box;background:#fcfcfc;border-top:1px solid #d0d0d0;border-bottom:1px solid #bcbcbc;border-left:1px solid #d4d4d4;border-right:2px solid #cbcbcb"></div>
<div style="position:absolute;left:776px;top:521px;width:147px;height:1px;box-sizing:border-box;background:#fff"></div>
<div style="position:absolute;left:775px;top:523px;width:150px;height:1px;box-sizing:border-box;background:#d3d3d3"></div>
<div style="position:absolute;left:907px;top:505px;width:1px;height:17px;box-sizing:border-box;background:#e4e4e4"></div>
<svg style="position:absolute;left:910px;top:511px" width="10" height="6" viewBox="0 0 10 6"><path d="M1 1 L5 5 L9 1" fill="none" stroke="#4e4e4e" stroke-width="1.1"/></svg>
<div class="t" style="left:26.3px;top:508.14px;font-size:12px;line-height:12px;color:#777777;font-weight:normal;transform:scaleX(0.88);">Contract Charge</div>
<div class="t" style="left:166.9px;top:508.14px;font-size:12px;line-height:12px;color:#777777;font-weight:normal;transform:scaleX(0.874);word-spacing:0.66px">5756 CONTRACT5756 CO - 5756: 5756 CHARGE</div>
<div class="t" style="right:332.20000000000005px;top:507.44px;font-size:12px;line-height:12px;color:#777777;font-weight:normal;transform:scaleX(0.88);transform-origin:right top;">20</div>
<div class="t" style="right:237px;top:507.44px;font-size:12px;line-height:12px;color:#777777;font-weight:normal;transform:scaleX(0.9);transform-origin:right top;">$0.00</div>
<div style="position:absolute;left:661px;top:505px;width:17px;height:17px;box-sizing:border-box;border:1px solid #cbcbcb;border-radius:4px;background:#fdfdfd"><div style="position:absolute;left:-1px;top:-1px;width:17px;height:17px"><svg width="17" height="17" viewBox="0 0 17 17" style="position:absolute;left:0;top:0" shape-rendering="crispEdges"><rect x="6" y="5" width="3" height="1"/><rect x="5" y="6" width="1" height="1"/><rect x="4" y="7" width="1" height="3"/><rect x="5" y="10" width="1" height="3"/><rect x="6" y="12" width="1" height="1"/><rect x="9" y="6" width="2" height="1"/><rect x="11" y="7" width="1" height="1"/><polygon points="10,11 15,11 15,6" shape-rendering="auto"/></svg></div></div>
<div style="position:absolute;left:756px;top:505px;width:17px;height:17px;box-sizing:border-box;border:1px solid #cbcbcb;border-radius:4px;background:#fdfdfd"><div style="position:absolute;left:-1px;top:-1px;width:17px;height:17px"><svg width="17" height="17" viewBox="0 0 17 17" style="position:absolute;left:0;top:0" shape-rendering="crispEdges"><rect x="6" y="5" width="3" height="1"/><rect x="5" y="6" width="1" height="1"/><rect x="4" y="7" width="1" height="3"/><rect x="5" y="10" width="1" height="3"/><rect x="6" y="12" width="1" height="1"/><rect x="9" y="6" width="2" height="1"/><rect x="11" y="7" width="1" height="1"/><polygon points="10,11 15,11 15,6" shape-rendering="auto"/></svg></div></div>
<div style="position:absolute;left:926px;top:505px;width:17px;height:17px;box-sizing:border-box;border:1px solid #d4d4d4;border-radius:4px;background:#fdfdfd"><svg width="17" height="17" viewBox="0 0 17 17" style="position:absolute;left:-1px;top:-1px"><path d="M5 13 C7 10 10 6 13 4.2" fill="none" stroke="#f00" stroke-width="2"/><path d="M5.5 4.5 C7.5 7 10 10 12 13" fill="none" stroke="#f00" stroke-width="2"/></svg></div>
<div style="position:absolute;left:24px;top:543px;width:921px;height:1px;box-sizing:border-box;background:#d7d7d7"></div>
<div style="position:absolute;left:163px;top:523px;width:1px;height:20px;box-sizing:border-box;background:#d7d7d7"></div>
<div style="position:absolute;left:600px;top:523px;width:1px;height:20px;box-sizing:border-box;background:#d7d7d7"></div>
<div style="position:absolute;left:660px;top:523px;width:1px;height:20px;box-sizing:border-box;background:#d7d7d7"></div>
<div style="position:absolute;left:679px;top:523px;width:1px;height:20px;box-sizing:border-box;background:#d7d7d7"></div>
<div style="position:absolute;left:754px;top:523px;width:1px;height:20px;box-sizing:border-box;background:#d7d7d7"></div>
<div style="position:absolute;left:944px;top:523px;width:1px;height:20px;box-sizing:border-box;background:#d7d7d7"></div>
<div style="position:absolute;left:775px;top:524px;width:150px;height:19px;box-sizing:border-box;background:#fcfcfc;border-top:1px solid #d0d0d0;border-bottom:1px solid #bcbcbc;border-left:1px solid #d4d4d4;border-right:2px solid #cbcbcb"></div>
<div style="position:absolute;left:776px;top:541px;width:147px;height:1px;box-sizing:border-box;background:#fff"></div>
<div style="position:absolute;left:775px;top:543px;width:150px;height:1px;box-sizing:border-box;background:#d3d3d3"></div>
<div style="position:absolute;left:907px;top:525px;width:1px;height:17px;box-sizing:border-box;background:#e4e4e4"></div>
<svg style="position:absolute;left:910px;top:531px" width="10" height="6" viewBox="0 0 10 6"><path d="M1 1 L5 5 L9 1" fill="none" stroke="#4e4e4e" stroke-width="1.1"/></svg>
<div class="t" style="left:26.3px;top:528.14px;font-size:12px;line-height:12px;color:#777777;font-weight:normal;transform:scaleX(0.88);">Contract Charge</div>
<div class="t" style="left:166.9px;top:528.14px;font-size:12px;line-height:12px;color:#777777;font-weight:normal;transform:scaleX(0.874);word-spacing:0.66px">7.13 pending - new charge: Add a new charge</div>
<div class="t" style="right:332.20000000000005px;top:527.44px;font-size:12px;line-height:12px;color:#777777;font-weight:normal;transform:scaleX(0.88);transform-origin:right top;">20</div>
<div class="t" style="right:237px;top:527.44px;font-size:12px;line-height:12px;color:#777777;font-weight:normal;transform:scaleX(0.9);transform-origin:right top;">$0.00</div>
<div style="position:absolute;left:661px;top:525px;width:17px;height:17px;box-sizing:border-box;border:1px solid #cbcbcb;border-radius:4px;background:#fdfdfd"><div style="position:absolute;left:-1px;top:-1px;width:17px;height:17px"><svg width="17" height="17" viewBox="0 0 17 17" style="position:absolute;left:0;top:0" shape-rendering="crispEdges"><rect x="6" y="5" width="3" height="1"/><rect x="5" y="6" width="1" height="1"/><rect x="4" y="7" width="1" height="3"/><rect x="5" y="10" width="1" height="3"/><rect x="6" y="12" width="1" height="1"/><rect x="9" y="6" width="2" height="1"/><rect x="11" y="7" width="1" height="1"/><polygon points="10,11 15,11 15,6" shape-rendering="auto"/></svg></div></div>
<div style="position:absolute;left:756px;top:525px;width:17px;height:17px;box-sizing:border-box;border:1px solid #cbcbcb;border-radius:4px;background:#fdfdfd"><div style="position:absolute;left:-1px;top:-1px;width:17px;height:17px"><svg width="17" height="17" viewBox="0 0 17 17" style="position:absolute;left:0;top:0" shape-rendering="crispEdges"><rect x="6" y="5" width="3" height="1"/><rect x="5" y="6" width="1" height="1"/><rect x="4" y="7" width="1" height="3"/><rect x="5" y="10" width="1" height="3"/><rect x="6" y="12" width="1" height="1"/><rect x="9" y="6" width="2" height="1"/><rect x="11" y="7" width="1" height="1"/><polygon points="10,11 15,11 15,6" shape-rendering="auto"/></svg></div></div>
<div style="position:absolute;left:926px;top:525px;width:17px;height:17px;box-sizing:border-box;border:1px solid #d4d4d4;border-radius:4px;background:#fdfdfd"><svg width="17" height="17" viewBox="0 0 17 17" style="position:absolute;left:-1px;top:-1px"><path d="M5 13 C7 10 10 6 13 4.2" fill="none" stroke="#f00" stroke-width="2"/><path d="M5.5 4.5 C7.5 7 10 10 12 13" fill="none" stroke="#f00" stroke-width="2"/></svg></div>
<div style="position:absolute;left:24px;top:563px;width:921px;height:1px;box-sizing:border-box;background:#d7d7d7"></div>
<div style="position:absolute;left:163px;top:543px;width:1px;height:20px;box-sizing:border-box;background:#d7d7d7"></div>
<div style="position:absolute;left:600px;top:543px;width:1px;height:20px;box-sizing:border-box;background:#d7d7d7"></div>
<div style="position:absolute;left:660px;top:543px;width:1px;height:20px;box-sizing:border-box;background:#d7d7d7"></div>
<div style="position:absolute;left:679px;top:543px;width:1px;height:20px;box-sizing:border-box;background:#d7d7d7"></div>
<div style="position:absolute;left:754px;top:543px;width:1px;height:20px;box-sizing:border-box;background:#d7d7d7"></div>
<div style="position:absolute;left:944px;top:543px;width:1px;height:20px;box-sizing:border-box;background:#d7d7d7"></div>
<div style="position:absolute;left:775px;top:544px;width:150px;height:19px;box-sizing:border-box;background:#fcfcfc;border-top:1px solid #d0d0d0;border-bottom:1px solid #bcbcbc;border-left:1px solid #d4d4d4;border-right:2px solid #cbcbcb"></div>
<div style="position:absolute;left:776px;top:561px;width:147px;height:1px;box-sizing:border-box;background:#fff"></div>
<div style="position:absolute;left:775px;top:563px;width:150px;height:1px;box-sizing:border-box;background:#d3d3d3"></div>
<div style="position:absolute;left:907px;top:545px;width:1px;height:17px;box-sizing:border-box;background:#e4e4e4"></div>
<svg style="position:absolute;left:910px;top:551px" width="10" height="6" viewBox="0 0 10 6"><path d="M1 1 L5 5 L9 1" fill="none" stroke="#4e4e4e" stroke-width="1.1"/></svg>
<div class="t" style="left:26.3px;top:548.14px;font-size:12px;line-height:12px;color:#777777;font-weight:normal;transform:scaleX(0.88);">Contract Charge</div>
<div class="t" style="left:166.9px;top:548.14px;font-size:12px;line-height:12px;color:#777777;font-weight:normal;transform:scaleX(0.874);word-spacing:0.66px">7.13 Reg Test ICP - 7.14 $100 Ad Hoc Excluded GST: 7.14 $100 Ad Hoc Excluded GST</div>
<div class="t" style="right:332.20000000000005px;top:547.44px;font-size:12px;line-height:12px;color:#777777;font-weight:normal;transform:scaleX(0.88);transform-origin:right top;">20</div>
<div class="t" style="right:237px;top:547.44px;font-size:12px;line-height:12px;color:#777777;font-weight:normal;transform:scaleX(0.9);transform-origin:right top;">$0.00</div>
<div style="position:absolute;left:661px;top:545px;width:17px;height:17px;box-sizing:border-box;border:1px solid #cbcbcb;border-radius:4px;background:#fdfdfd"><div style="position:absolute;left:-1px;top:-1px;width:17px;height:17px"><svg width="17" height="17" viewBox="0 0 17 17" style="position:absolute;left:0;top:0" shape-rendering="crispEdges"><rect x="6" y="5" width="3" height="1"/><rect x="5" y="6" width="1" height="1"/><rect x="4" y="7" width="1" height="3"/><rect x="5" y="10" width="1" height="3"/><rect x="6" y="12" width="1" height="1"/><rect x="9" y="6" width="2" height="1"/><rect x="11" y="7" width="1" height="1"/><polygon points="10,11 15,11 15,6" shape-rendering="auto"/></svg></div></div>
<div style="position:absolute;left:756px;top:545px;width:17px;height:17px;box-sizing:border-box;border:1px solid #cbcbcb;border-radius:4px;background:#fdfdfd"><div style="position:absolute;left:-1px;top:-1px;width:17px;height:17px"><svg width="17" height="17" viewBox="0 0 17 17" style="position:absolute;left:0;top:0" shape-rendering="crispEdges"><rect x="6" y="5" width="3" height="1"/><rect x="5" y="6" width="1" height="1"/><rect x="4" y="7" width="1" height="3"/><rect x="5" y="10" width="1" height="3"/><rect x="6" y="12" width="1" height="1"/><rect x="9" y="6" width="2" height="1"/><rect x="11" y="7" width="1" height="1"/><polygon points="10,11 15,11 15,6" shape-rendering="auto"/></svg></div></div>
<div style="position:absolute;left:926px;top:545px;width:17px;height:17px;box-sizing:border-box;border:1px solid #d4d4d4;border-radius:4px;background:#fdfdfd"><svg width="17" height="17" viewBox="0 0 17 17" style="position:absolute;left:-1px;top:-1px"><path d="M5 13 C7 10 10 6 13 4.2" fill="none" stroke="#f00" stroke-width="2"/><path d="M5.5 4.5 C7.5 7 10 10 12 13" fill="none" stroke="#f00" stroke-width="2"/></svg></div>
<div style="position:absolute;left:24px;top:583px;width:921px;height:1px;box-sizing:border-box;background:#d7d7d7"></div>
<div style="position:absolute;left:163px;top:563px;width:1px;height:20px;box-sizing:border-box;background:#d7d7d7"></div>
<div style="position:absolute;left:600px;top:563px;width:1px;height:20px;box-sizing:border-box;background:#d7d7d7"></div>
<div style="position:absolute;left:660px;top:563px;width:1px;height:20px;box-sizing:border-box;background:#d7d7d7"></div>
<div style="position:absolute;left:679px;top:563px;width:1px;height:20px;box-sizing:border-box;background:#d7d7d7"></div>
<div style="position:absolute;left:754px;top:563px;width:1px;height:20px;box-sizing:border-box;background:#d7d7d7"></div>
<div style="position:absolute;left:944px;top:563px;width:1px;height:20px;box-sizing:border-box;background:#d7d7d7"></div>
<div style="position:absolute;left:775px;top:564px;width:150px;height:19px;box-sizing:border-box;background:#fcfcfc;border-top:1px solid #d0d0d0;border-bottom:1px solid #bcbcbc;border-left:1px solid #d4d4d4;border-right:2px solid #cbcbcb"></div>
<div style="position:absolute;left:776px;top:581px;width:147px;height:1px;box-sizing:border-box;background:#fff"></div>
<div style="position:absolute;left:775px;top:583px;width:150px;height:1px;box-sizing:border-box;background:#d3d3d3"></div>
<div style="position:absolute;left:907px;top:565px;width:1px;height:17px;box-sizing:border-box;background:#e4e4e4"></div>
<svg style="position:absolute;left:910px;top:571px" width="10" height="6" viewBox="0 0 10 6"><path d="M1 1 L5 5 L9 1" fill="none" stroke="#4e4e4e" stroke-width="1.1"/></svg>
<div class="t" style="left:26.3px;top:568.14px;font-size:12px;line-height:12px;color:#777777;font-weight:normal;transform:scaleX(0.88);">Contract Charge</div>
<div class="t" style="left:166.9px;top:568.14px;font-size:12px;line-height:12px;color:#777777;font-weight:normal;transform:scaleX(0.874);word-spacing:0.66px">7.13 Reg Test ICP - 7.14 $100 Per Hour Price Includes GST: 7.14 $100 Per Hour Price I...</div>
<div class="t" style="right:332.20000000000005px;top:567.44px;font-size:12px;line-height:12px;color:#777777;font-weight:normal;transform:scaleX(0.88);transform-origin:right top;">20</div>
<div class="t" style="right:237px;top:567.44px;font-size:12px;line-height:12px;color:#777777;font-weight:normal;transform:scaleX(0.9);transform-origin:right top;">$0.00</div>
<div style="position:absolute;left:661px;top:565px;width:17px;height:17px;box-sizing:border-box;border:1px solid #cbcbcb;border-radius:4px;background:#fdfdfd"><div style="position:absolute;left:-1px;top:-1px;width:17px;height:17px"><svg width="17" height="17" viewBox="0 0 17 17" style="position:absolute;left:0;top:0" shape-rendering="crispEdges"><rect x="6" y="5" width="3" height="1"/><rect x="5" y="6" width="1" height="1"/><rect x="4" y="7" width="1" height="3"/><rect x="5" y="10" width="1" height="3"/><rect x="6" y="12" width="1" height="1"/><rect x="9" y="6" width="2" height="1"/><rect x="11" y="7" width="1" height="1"/><polygon points="10,11 15,11 15,6" shape-rendering="auto"/></svg></div></div>
<div style="position:absolute;left:756px;top:565px;width:17px;height:17px;box-sizing:border-box;border:1px solid #cbcbcb;border-radius:4px;background:#fdfdfd"><div style="position:absolute;left:-1px;top:-1px;width:17px;height:17px"><svg width="17" height="17" viewBox="0 0 17 17" style="position:absolute;left:0;top:0" shape-rendering="crispEdges"><rect x="6" y="5" width="3" height="1"/><rect x="5" y="6" width="1" height="1"/><rect x="4" y="7" width="1" height="3"/><rect x="5" y="10" width="1" height="3"/><rect x="6" y="12" width="1" height="1"/><rect x="9" y="6" width="2" height="1"/><rect x="11" y="7" width="1" height="1"/><polygon points="10,11 15,11 15,6" shape-rendering="auto"/></svg></div></div>
<div style="position:absolute;left:926px;top:565px;width:17px;height:17px;box-sizing:border-box;border:1px solid #d4d4d4;border-radius:4px;background:#fdfdfd"><svg width="17" height="17" viewBox="0 0 17 17" style="position:absolute;left:-1px;top:-1px"><path d="M5 13 C7 10 10 6 13 4.2" fill="none" stroke="#f00" stroke-width="2"/><path d="M5.5 4.5 C7.5 7 10 10 12 13" fill="none" stroke="#f00" stroke-width="2"/></svg></div>
<div style="position:absolute;left:24px;top:603px;width:921px;height:1px;box-sizing:border-box;background:#d7d7d7"></div>
<div style="position:absolute;left:163px;top:583px;width:1px;height:20px;box-sizing:border-box;background:#d7d7d7"></div>
<div style="position:absolute;left:600px;top:583px;width:1px;height:20px;box-sizing:border-box;background:#d7d7d7"></div>
<div style="position:absolute;left:660px;top:583px;width:1px;height:20px;box-sizing:border-box;background:#d7d7d7"></div>
<div style="position:absolute;left:679px;top:583px;width:1px;height:20px;box-sizing:border-box;background:#d7d7d7"></div>
<div style="position:absolute;left:754px;top:583px;width:1px;height:20px;box-sizing:border-box;background:#d7d7d7"></div>
<div style="position:absolute;left:944px;top:583px;width:1px;height:20px;box-sizing:border-box;background:#d7d7d7"></div>
<div style="position:absolute;left:775px;top:584px;width:150px;height:19px;box-sizing:border-box;background:#fcfcfc;border-top:1px solid #d0d0d0;border-bottom:1px solid #bcbcbc;border-left:1px solid #d4d4d4;border-right:2px solid #cbcbcb"></div>
<div style="position:absolute;left:776px;top:601px;width:147px;height:1px;box-sizing:border-box;background:#fff"></div>
<div style="position:absolute;left:775px;top:603px;width:150px;height:1px;box-sizing:border-box;background:#d3d3d3"></div>
<div style="position:absolute;left:907px;top:585px;width:1px;height:17px;box-sizing:border-box;background:#e4e4e4"></div>
<svg style="position:absolute;left:910px;top:591px" width="10" height="6" viewBox="0 0 10 6"><path d="M1 1 L5 5 L9 1" fill="none" stroke="#4e4e4e" stroke-width="1.1"/></svg>
<div class="t" style="left:26.3px;top:588.14px;font-size:12px;line-height:12px;color:#777777;font-weight:normal;transform:scaleX(0.88);">Contract Charge</div>
<div class="t" style="left:166.9px;top:588.14px;font-size:12px;line-height:12px;color:#777777;font-weight:normal;transform:scaleX(0.874);word-spacing:0.66px">7.13 Reg Test ICP - 7.14 $100 Per Unit GST Exempt: 7.14 $100 Per Unit GST Exempt</div>
<div class="t" style="right:332.20000000000005px;top:587.44px;font-size:12px;line-height:12px;color:#777777;font-weight:normal;transform:scaleX(0.88);transform-origin:right top;">20</div>
<div class="t" style="right:237px;top:587.44px;font-size:12px;line-height:12px;color:#777777;font-weight:normal;transform:scaleX(0.9);transform-origin:right top;">$0.00</div>
<div style="position:absolute;left:661px;top:585px;width:17px;height:17px;box-sizing:border-box;border:1px solid #cbcbcb;border-radius:4px;background:#fdfdfd"><div style="position:absolute;left:-1px;top:-1px;width:17px;height:17px"><svg width="17" height="17" viewBox="0 0 17 17" style="position:absolute;left:0;top:0" shape-rendering="crispEdges"><rect x="6" y="5" width="3" height="1"/><rect x="5" y="6" width="1" height="1"/><rect x="4" y="7" width="1" height="3"/><rect x="5" y="10" width="1" height="3"/><rect x="6" y="12" width="1" height="1"/><rect x="9" y="6" width="2" height="1"/><rect x="11" y="7" width="1" height="1"/><polygon points="10,11 15,11 15,6" shape-rendering="auto"/></svg></div></div>
<div style="position:absolute;left:756px;top:585px;width:17px;height:17px;box-sizing:border-box;border:1px solid #cbcbcb;border-radius:4px;background:#fdfdfd"><div style="position:absolute;left:-1px;top:-1px;width:17px;height:17px"><svg width="17" height="17" viewBox="0 0 17 17" style="position:absolute;left:0;top:0" shape-rendering="crispEdges"><rect x="6" y="5" width="3" height="1"/><rect x="5" y="6" width="1" height="1"/><rect x="4" y="7" width="1" height="3"/><rect x="5" y="10" width="1" height="3"/><rect x="6" y="12" width="1" height="1"/><rect x="9" y="6" width="2" height="1"/><rect x="11" y="7" width="1" height="1"/><polygon points="10,11 15,11 15,6" shape-rendering="auto"/></svg></div></div>
<div style="position:absolute;left:926px;top:585px;width:17px;height:17px;box-sizing:border-box;border:1px solid #d4d4d4;border-radius:4px;background:#fdfdfd"><svg width="17" height="17" viewBox="0 0 17 17" style="position:absolute;left:-1px;top:-1px"><path d="M5 13 C7 10 10 6 13 4.2" fill="none" stroke="#f00" stroke-width="2"/><path d="M5.5 4.5 C7.5 7 10 10 12 13" fill="none" stroke="#f00" stroke-width="2"/></svg></div>
<div style="position:absolute;left:24px;top:623px;width:921px;height:1px;box-sizing:border-box;background:#d7d7d7"></div>
<div style="position:absolute;left:163px;top:603px;width:1px;height:20px;box-sizing:border-box;background:#d7d7d7"></div>
<div style="position:absolute;left:600px;top:603px;width:1px;height:20px;box-sizing:border-box;background:#d7d7d7"></div>
<div style="position:absolute;left:660px;top:603px;width:1px;height:20px;box-sizing:border-box;background:#d7d7d7"></div>
<div style="position:absolute;left:679px;top:603px;width:1px;height:20px;box-sizing:border-box;background:#d7d7d7"></div>
<div style="position:absolute;left:754px;top:603px;width:1px;height:20px;box-sizing:border-box;background:#d7d7d7"></div>
<div style="position:absolute;left:944px;top:603px;width:1px;height:20px;box-sizing:border-box;background:#d7d7d7"></div>
<div style="position:absolute;left:775px;top:604px;width:150px;height:19px;box-sizing:border-box;background:#fcfcfc;border-top:1px solid #d0d0d0;border-bottom:1px solid #bcbcbc;border-left:1px solid #d4d4d4;border-right:2px solid #cbcbcb"></div>
<div style="position:absolute;left:776px;top:621px;width:147px;height:1px;box-sizing:border-box;background:#fff"></div>
<div style="position:absolute;left:775px;top:623px;width:150px;height:1px;box-sizing:border-box;background:#d3d3d3"></div>
<div style="position:absolute;left:907px;top:605px;width:1px;height:17px;box-sizing:border-box;background:#e4e4e4"></div>
<svg style="position:absolute;left:910px;top:611px" width="10" height="6" viewBox="0 0 10 6"><path d="M1 1 L5 5 L9 1" fill="none" stroke="#4e4e4e" stroke-width="1.1"/></svg>
<div class="t" style="left:26.3px;top:608.14px;font-size:12px;line-height:12px;color:#777777;font-weight:normal;transform:scaleX(0.88);">Contract Charge</div>
<div class="t" style="left:166.9px;top:608.14px;font-size:12px;line-height:12px;color:#777777;font-weight:normal;transform:scaleX(0.874);word-spacing:0.66px">7.13 Reg Test ICP - 7.14 $150 Fixed Rate Warn Max Qty 2 Max 2 Occurenc: 7.14 $150 ...</div>
<div class="t" style="right:332.20000000000005px;top:607.44px;font-size:12px;line-height:12px;color:#777777;font-weight:normal;transform:scaleX(0.88);transform-origin:right top;">20</div>
<div class="t" style="right:237px;top:607.44px;font-size:12px;line-height:12px;color:#777777;font-weight:normal;transform:scaleX(0.9);transform-origin:right top;">$0.00</div>
<div style="position:absolute;left:661px;top:605px;width:17px;height:17px;box-sizing:border-box;border:1px solid #cbcbcb;border-radius:4px;background:#fdfdfd"><div style="position:absolute;left:-1px;top:-1px;width:17px;height:17px"><svg width="17" height="17" viewBox="0 0 17 17" style="position:absolute;left:0;top:0" shape-rendering="crispEdges"><rect x="6" y="5" width="3" height="1"/><rect x="5" y="6" width="1" height="1"/><rect x="4" y="7" width="1" height="3"/><rect x="5" y="10" width="1" height="3"/><rect x="6" y="12" width="1" height="1"/><rect x="9" y="6" width="2" height="1"/><rect x="11" y="7" width="1" height="1"/><polygon points="10,11 15,11 15,6" shape-rendering="auto"/></svg></div></div>
<div style="position:absolute;left:756px;top:605px;width:17px;height:17px;box-sizing:border-box;border:1px solid #cbcbcb;border-radius:4px;background:#fdfdfd"><div style="position:absolute;left:-1px;top:-1px;width:17px;height:17px"><svg width="17" height="17" viewBox="0 0 17 17" style="position:absolute;left:0;top:0" shape-rendering="crispEdges"><rect x="6" y="5" width="3" height="1"/><rect x="5" y="6" width="1" height="1"/><rect x="4" y="7" width="1" height="3"/><rect x="5" y="10" width="1" height="3"/><rect x="6" y="12" width="1" height="1"/><rect x="9" y="6" width="2" height="1"/><rect x="11" y="7" width="1" height="1"/><polygon points="10,11 15,11 15,6" shape-rendering="auto"/></svg></div></div>
<div style="position:absolute;left:926px;top:605px;width:17px;height:17px;box-sizing:border-box;border:1px solid #d4d4d4;border-radius:4px;background:#fdfdfd"><svg width="17" height="17" viewBox="0 0 17 17" style="position:absolute;left:-1px;top:-1px"><path d="M5 13 C7 10 10 6 13 4.2" fill="none" stroke="#f00" stroke-width="2"/><path d="M5.5 4.5 C7.5 7 10 10 12 13" fill="none" stroke="#f00" stroke-width="2"/></svg></div>
<div style="position:absolute;left:24px;top:643px;width:921px;height:1px;box-sizing:border-box;background:#d7d7d7"></div>
<div style="position:absolute;left:163px;top:623px;width:1px;height:20px;box-sizing:border-box;background:#d7d7d7"></div>
<div style="position:absolute;left:600px;top:623px;width:1px;height:20px;box-sizing:border-box;background:#d7d7d7"></div>
<div style="position:absolute;left:660px;top:623px;width:1px;height:20px;box-sizing:border-box;background:#d7d7d7"></div>
<div style="position:absolute;left:679px;top:623px;width:1px;height:20px;box-sizing:border-box;background:#d7d7d7"></div>
<div style="position:absolute;left:754px;top:623px;width:1px;height:20px;box-sizing:border-box;background:#d7d7d7"></div>
<div style="position:absolute;left:944px;top:623px;width:1px;height:20px;box-sizing:border-box;background:#d7d7d7"></div>
<div style="position:absolute;left:775px;top:624px;width:150px;height:19px;box-sizing:border-box;background:#fcfcfc;border-top:1px solid #d0d0d0;border-bottom:1px solid #bcbcbc;border-left:1px solid #d4d4d4;border-right:2px solid #cbcbcb"></div>
<div style="position:absolute;left:776px;top:641px;width:147px;height:1px;box-sizing:border-box;background:#fff"></div>
<div style="position:absolute;left:775px;top:643px;width:150px;height:1px;box-sizing:border-box;background:#d3d3d3"></div>
<div style="position:absolute;left:907px;top:625px;width:1px;height:17px;box-sizing:border-box;background:#e4e4e4"></div>
<svg style="position:absolute;left:910px;top:631px" width="10" height="6" viewBox="0 0 10 6"><path d="M1 1 L5 5 L9 1" fill="none" stroke="#4e4e4e" stroke-width="1.1"/></svg>
<div class="t" style="left:26.3px;top:628.14px;font-size:12px;line-height:12px;color:#777777;font-weight:normal;transform:scaleX(0.88);">Contract Charge</div>
<div class="t" style="left:166.9px;top:628.14px;font-size:12px;line-height:12px;color:#777777;font-weight:normal;transform:scaleX(0.874);word-spacing:0.66px">7.13 Reg Test ICP - 7.14 $20 Default 20min Max 3 Occurences Restrictio: 7.14 $20 Def...</div>
<div class="t" style="right:332.20000000000005px;top:627.44px;font-size:12px;line-height:12px;color:#777777;font-weight:normal;transform:scaleX(0.88);transform-origin:right top;">20</div>
<div class="t" style="right:237px;top:627.44px;font-size:12px;line-height:12px;color:#777777;font-weight:normal;transform:scaleX(0.9);transform-origin:right top;">$0.00</div>
<div style="position:absolute;left:661px;top:625px;width:17px;height:17px;box-sizing:border-box;border:1px solid #cbcbcb;border-radius:4px;background:#fdfdfd"><div style="position:absolute;left:-1px;top:-1px;width:17px;height:17px"><svg width="17" height="17" viewBox="0 0 17 17" style="position:absolute;left:0;top:0" shape-rendering="crispEdges"><rect x="6" y="5" width="3" height="1"/><rect x="5" y="6" width="1" height="1"/><rect x="4" y="7" width="1" height="3"/><rect x="5" y="10" width="1" height="3"/><rect x="6" y="12" width="1" height="1"/><rect x="9" y="6" width="2" height="1"/><rect x="11" y="7" width="1" height="1"/><polygon points="10,11 15,11 15,6" shape-rendering="auto"/></svg></div></div>
<div style="position:absolute;left:756px;top:625px;width:17px;height:17px;box-sizing:border-box;border:1px solid #cbcbcb;border-radius:4px;background:#fdfdfd"><div style="position:absolute;left:-1px;top:-1px;width:17px;height:17px"><svg width="17" height="17" viewBox="0 0 17 17" style="position:absolute;left:0;top:0" shape-rendering="crispEdges"><rect x="6" y="5" width="3" height="1"/><rect x="5" y="6" width="1" height="1"/><rect x="4" y="7" width="1" height="3"/><rect x="5" y="10" width="1" height="3"/><rect x="6" y="12" width="1" height="1"/><rect x="9" y="6" width="2" height="1"/><rect x="11" y="7" width="1" height="1"/><polygon points="10,11 15,11 15,6" shape-rendering="auto"/></svg></div></div>
<div style="position:absolute;left:926px;top:625px;width:17px;height:17px;box-sizing:border-box;border:1px solid #d4d4d4;border-radius:4px;background:#fdfdfd"><svg width="17" height="17" viewBox="0 0 17 17" style="position:absolute;left:-1px;top:-1px"><path d="M5 13 C7 10 10 6 13 4.2" fill="none" stroke="#f00" stroke-width="2"/><path d="M5.5 4.5 C7.5 7 10 10 12 13" fill="none" stroke="#f00" stroke-width="2"/></svg></div>
<div style="position:absolute;left:24px;top:663px;width:921px;height:1px;box-sizing:border-box;background:#d7d7d7"></div>
<div style="position:absolute;left:163px;top:643px;width:1px;height:20px;box-sizing:border-box;background:#d7d7d7"></div>
<div style="position:absolute;left:600px;top:643px;width:1px;height:20px;box-sizing:border-box;background:#d7d7d7"></div>
<div style="position:absolute;left:660px;top:643px;width:1px;height:20px;box-sizing:border-box;background:#d7d7d7"></div>
<div style="position:absolute;left:679px;top:643px;width:1px;height:20px;box-sizing:border-box;background:#d7d7d7"></div>
<div style="position:absolute;left:754px;top:643px;width:1px;height:20px;box-sizing:border-box;background:#d7d7d7"></div>
<div style="position:absolute;left:944px;top:643px;width:1px;height:20px;box-sizing:border-box;background:#d7d7d7"></div>
<div style="position:absolute;left:775px;top:644px;width:150px;height:19px;box-sizing:border-box;background:#fcfcfc;border-top:1px solid #d0d0d0;border-bottom:1px solid #bcbcbc;border-left:1px solid #d4d4d4;border-right:2px solid #cbcbcb"></div>
<div style="position:absolute;left:776px;top:661px;width:147px;height:1px;box-sizing:border-box;background:#fff"></div>
<div style="position:absolute;left:775px;top:663px;width:150px;height:1px;box-sizing:border-box;background:#d3d3d3"></div>
<div style="position:absolute;left:907px;top:645px;width:1px;height:17px;box-sizing:border-box;background:#e4e4e4"></div>
<svg style="position:absolute;left:910px;top:651px" width="10" height="6" viewBox="0 0 10 6"><path d="M1 1 L5 5 L9 1" fill="none" stroke="#4e4e4e" stroke-width="1.1"/></svg>
<div class="t" style="left:26.3px;top:648.14px;font-size:12px;line-height:12px;color:#777777;font-weight:normal;transform:scaleX(0.88);">Contract Charge</div>
<div class="t" style="left:166.9px;top:648.14px;font-size:12px;line-height:12px;color:#777777;font-weight:normal;transform:scaleX(0.874);word-spacing:0.66px">7.137.13 Regression&nbsp; - 7.13 hour: 7.13 per hour</div>
<div class="t" style="right:332.20000000000005px;top:647.44px;font-size:12px;line-height:12px;color:#777777;font-weight:normal;transform:scaleX(0.88);transform-origin:right top;">20</div>
<div class="t" style="right:237px;top:647.44px;font-size:12px;line-height:12px;color:#777777;font-weight:normal;transform:scaleX(0.9);transform-origin:right top;">$0.00</div>
<div style="position:absolute;left:661px;top:645px;width:17px;height:17px;box-sizing:border-box;border:1px solid #cbcbcb;border-radius:4px;background:#fdfdfd"><div style="position:absolute;left:-1px;top:-1px;width:17px;height:17px"><svg width="17" height="17" viewBox="0 0 17 17" style="position:absolute;left:0;top:0" shape-rendering="crispEdges"><rect x="6" y="5" width="3" height="1"/><rect x="5" y="6" width="1" height="1"/><rect x="4" y="7" width="1" height="3"/><rect x="5" y="10" width="1" height="3"/><rect x="6" y="12" width="1" height="1"/><rect x="9" y="6" width="2" height="1"/><rect x="11" y="7" width="1" height="1"/><polygon points="10,11 15,11 15,6" shape-rendering="auto"/></svg></div></div>
<div style="position:absolute;left:756px;top:645px;width:17px;height:17px;box-sizing:border-box;border:1px solid #cbcbcb;border-radius:4px;background:#fdfdfd"><div style="position:absolute;left:-1px;top:-1px;width:17px;height:17px"><svg width="17" height="17" viewBox="0 0 17 17" style="position:absolute;left:0;top:0" shape-rendering="crispEdges"><rect x="6" y="5" width="3" height="1"/><rect x="5" y="6" width="1" height="1"/><rect x="4" y="7" width="1" height="3"/><rect x="5" y="10" width="1" height="3"/><rect x="6" y="12" width="1" height="1"/><rect x="9" y="6" width="2" height="1"/><rect x="11" y="7" width="1" height="1"/><polygon points="10,11 15,11 15,6" shape-rendering="auto"/></svg></div></div>
<div style="position:absolute;left:926px;top:645px;width:17px;height:17px;box-sizing:border-box;border:1px solid #d4d4d4;border-radius:4px;background:#fdfdfd"><svg width="17" height="17" viewBox="0 0 17 17" style="position:absolute;left:-1px;top:-1px"><path d="M5 13 C7 10 10 6 13 4.2" fill="none" stroke="#f00" stroke-width="2"/><path d="M5.5 4.5 C7.5 7 10 10 12 13" fill="none" stroke="#f00" stroke-width="2"/></svg></div>
<div style="position:absolute;left:24px;top:683px;width:921px;height:1px;box-sizing:border-box;background:#d7d7d7"></div>
<div style="position:absolute;left:163px;top:663px;width:1px;height:20px;box-sizing:border-box;background:#d7d7d7"></div>
<div style="position:absolute;left:600px;top:663px;width:1px;height:20px;box-sizing:border-box;background:#d7d7d7"></div>
<div style="position:absolute;left:660px;top:663px;width:1px;height:20px;box-sizing:border-box;background:#d7d7d7"></div>
<div style="position:absolute;left:679px;top:663px;width:1px;height:20px;box-sizing:border-box;background:#d7d7d7"></div>
<div style="position:absolute;left:754px;top:663px;width:1px;height:20px;box-sizing:border-box;background:#d7d7d7"></div>
<div style="position:absolute;left:944px;top:663px;width:1px;height:20px;box-sizing:border-box;background:#d7d7d7"></div>
<div style="position:absolute;left:775px;top:664px;width:150px;height:19px;box-sizing:border-box;background:#fcfcfc;border-top:1px solid #d0d0d0;border-bottom:1px solid #bcbcbc;border-left:1px solid #d4d4d4;border-right:2px solid #cbcbcb"></div>
<div style="position:absolute;left:776px;top:681px;width:147px;height:1px;box-sizing:border-box;background:#fff"></div>
<div style="position:absolute;left:775px;top:683px;width:150px;height:1px;box-sizing:border-box;background:#d3d3d3"></div>
<div style="position:absolute;left:907px;top:665px;width:1px;height:17px;box-sizing:border-box;background:#e4e4e4"></div>
<svg style="position:absolute;left:910px;top:671px" width="10" height="6" viewBox="0 0 10 6"><path d="M1 1 L5 5 L9 1" fill="none" stroke="#4e4e4e" stroke-width="1.1"/></svg>
<div class="t" style="left:26.3px;top:668.14px;font-size:12px;line-height:12px;color:#777777;font-weight:normal;transform:scaleX(0.88);">Contract Charge</div>
<div class="t" style="left:166.9px;top:668.14px;font-size:12px;line-height:12px;color:#777777;font-weight:normal;transform:scaleX(0.874);word-spacing:0.66px">7.137.13 Regression&nbsp; - CCG: Contract Class - Gym</div>
<div class="t" style="right:332.20000000000005px;top:667.44px;font-size:12px;line-height:12px;color:#777777;font-weight:normal;transform:scaleX(0.88);transform-origin:right top;">20</div>
<div class="t" style="right:237px;top:667.44px;font-size:12px;line-height:12px;color:#777777;font-weight:normal;transform:scaleX(0.9);transform-origin:right top;">$0.00</div>
<div style="position:absolute;left:661px;top:665px;width:17px;height:17px;box-sizing:border-box;border:1px solid #cbcbcb;border-radius:4px;background:#fdfdfd"><div style="position:absolute;left:-1px;top:-1px;width:17px;height:17px"><svg width="17" height="17" viewBox="0 0 17 17" style="position:absolute;left:0;top:0" shape-rendering="crispEdges"><rect x="6" y="5" width="3" height="1"/><rect x="5" y="6" width="1" height="1"/><rect x="4" y="7" width="1" height="3"/><rect x="5" y="10" width="1" height="3"/><rect x="6" y="12" width="1" height="1"/><rect x="9" y="6" width="2" height="1"/><rect x="11" y="7" width="1" height="1"/><polygon points="10,11 15,11 15,6" shape-rendering="auto"/></svg></div></div>
<div style="position:absolute;left:756px;top:665px;width:17px;height:17px;box-sizing:border-box;border:1px solid #cbcbcb;border-radius:4px;background:#fdfdfd"><div style="position:absolute;left:-1px;top:-1px;width:17px;height:17px"><svg width="17" height="17" viewBox="0 0 17 17" style="position:absolute;left:0;top:0" shape-rendering="crispEdges"><rect x="6" y="5" width="3" height="1"/><rect x="5" y="6" width="1" height="1"/><rect x="4" y="7" width="1" height="3"/><rect x="5" y="10" width="1" height="3"/><rect x="6" y="12" width="1" height="1"/><rect x="9" y="6" width="2" height="1"/><rect x="11" y="7" width="1" height="1"/><polygon points="10,11 15,11 15,6" shape-rendering="auto"/></svg></div></div>
<div style="position:absolute;left:926px;top:665px;width:17px;height:17px;box-sizing:border-box;border:1px solid #d4d4d4;border-radius:4px;background:#fdfdfd"><svg width="17" height="17" viewBox="0 0 17 17" style="position:absolute;left:-1px;top:-1px"><path d="M5 13 C7 10 10 6 13 4.2" fill="none" stroke="#f00" stroke-width="2"/><path d="M5.5 4.5 C7.5 7 10 10 12 13" fill="none" stroke="#f00" stroke-width="2"/></svg></div>
<div style="position:absolute;left:24px;top:703px;width:921px;height:1px;box-sizing:border-box;background:#d7d7d7"></div>
<div style="position:absolute;left:163px;top:683px;width:1px;height:20px;box-sizing:border-box;background:#d7d7d7"></div>
<div style="position:absolute;left:600px;top:683px;width:1px;height:20px;box-sizing:border-box;background:#d7d7d7"></div>
<div style="position:absolute;left:660px;top:683px;width:1px;height:20px;box-sizing:border-box;background:#d7d7d7"></div>
<div style="position:absolute;left:679px;top:683px;width:1px;height:20px;box-sizing:border-box;background:#d7d7d7"></div>
<div style="position:absolute;left:754px;top:683px;width:1px;height:20px;box-sizing:border-box;background:#d7d7d7"></div>
<div style="position:absolute;left:944px;top:683px;width:1px;height:20px;box-sizing:border-box;background:#d7d7d7"></div>
<div style="position:absolute;left:775px;top:684px;width:150px;height:19px;box-sizing:border-box;background:#fcfcfc;border-top:1px solid #d0d0d0;border-bottom:1px solid #bcbcbc;border-left:1px solid #d4d4d4;border-right:2px solid #cbcbcb"></div>
<div style="position:absolute;left:776px;top:701px;width:147px;height:1px;box-sizing:border-box;background:#fff"></div>
<div style="position:absolute;left:775px;top:703px;width:150px;height:1px;box-sizing:border-box;background:#d3d3d3"></div>
<div style="position:absolute;left:907px;top:685px;width:1px;height:17px;box-sizing:border-box;background:#e4e4e4"></div>
<svg style="position:absolute;left:910px;top:691px" width="10" height="6" viewBox="0 0 10 6"><path d="M1 1 L5 5 L9 1" fill="none" stroke="#4e4e4e" stroke-width="1.1"/></svg>
<div class="t" style="left:26.3px;top:688.14px;font-size:12px;line-height:12px;color:#777777;font-weight:normal;transform:scaleX(0.88);">Contract Charge</div>
<div class="t" style="left:166.9px;top:688.14px;font-size:12px;line-height:12px;color:#777777;font-weight:normal;transform:scaleX(0.874);word-spacing:0.66px">7.137.13 Regression&nbsp; - OC: other charge</div>
<div class="t" style="right:332.20000000000005px;top:687.44px;font-size:12px;line-height:12px;color:#777777;font-weight:normal;transform:scaleX(0.88);transform-origin:right top;">20</div>
<div class="t" style="right:237px;top:687.44px;font-size:12px;line-height:12px;color:#777777;font-weight:normal;transform:scaleX(0.9);transform-origin:right top;">$0.00</div>
<div style="position:absolute;left:661px;top:685px;width:17px;height:17px;box-sizing:border-box;border:1px solid #cbcbcb;border-radius:4px;background:#fdfdfd"><div style="position:absolute;left:-1px;top:-1px;width:17px;height:17px"><svg width="17" height="17" viewBox="0 0 17 17" style="position:absolute;left:0;top:0" shape-rendering="crispEdges"><rect x="6" y="5" width="3" height="1"/><rect x="5" y="6" width="1" height="1"/><rect x="4" y="7" width="1" height="3"/><rect x="5" y="10" width="1" height="3"/><rect x="6" y="12" width="1" height="1"/><rect x="9" y="6" width="2" height="1"/><rect x="11" y="7" width="1" height="1"/><polygon points="10,11 15,11 15,6" shape-rendering="auto"/></svg></div></div>
<div style="position:absolute;left:756px;top:685px;width:17px;height:17px;box-sizing:border-box;border:1px solid #cbcbcb;border-radius:4px;background:#fdfdfd"><div style="position:absolute;left:-1px;top:-1px;width:17px;height:17px"><svg width="17" height="17" viewBox="0 0 17 17" style="position:absolute;left:0;top:0" shape-rendering="crispEdges"><rect x="6" y="5" width="3" height="1"/><rect x="5" y="6" width="1" height="1"/><rect x="4" y="7" width="1" height="3"/><rect x="5" y="10" width="1" height="3"/><rect x="6" y="12" width="1" height="1"/><rect x="9" y="6" width="2" height="1"/><rect x="11" y="7" width="1" height="1"/><polygon points="10,11 15,11 15,6" shape-rendering="auto"/></svg></div></div>
<div style="position:absolute;left:926px;top:685px;width:17px;height:17px;box-sizing:border-box;border:1px solid #d4d4d4;border-radius:4px;background:#fdfdfd"><svg width="17" height="17" viewBox="0 0 17 17" style="position:absolute;left:-1px;top:-1px"><path d="M5 13 C7 10 10 6 13 4.2" fill="none" stroke="#f00" stroke-width="2"/><path d="M5.5 4.5 C7.5 7 10 10 12 13" fill="none" stroke="#f00" stroke-width="2"/></svg></div>
<div style="position:absolute;left:24px;top:723px;width:921px;height:1px;box-sizing:border-box;background:#d7d7d7"></div>
<div style="position:absolute;left:163px;top:703px;width:1px;height:20px;box-sizing:border-box;background:#d7d7d7"></div>
<div style="position:absolute;left:600px;top:703px;width:1px;height:20px;box-sizing:border-box;background:#d7d7d7"></div>
<div style="position:absolute;left:660px;top:703px;width:1px;height:20px;box-sizing:border-box;background:#d7d7d7"></div>
<div style="position:absolute;left:679px;top:703px;width:1px;height:20px;box-sizing:border-box;background:#d7d7d7"></div>
<div style="position:absolute;left:754px;top:703px;width:1px;height:20px;box-sizing:border-box;background:#d7d7d7"></div>
<div style="position:absolute;left:944px;top:703px;width:1px;height:20px;box-sizing:border-box;background:#d7d7d7"></div>
<div style="position:absolute;left:775px;top:704px;width:150px;height:19px;box-sizing:border-box;background:#fcfcfc;border-top:1px solid #d0d0d0;border-bottom:1px solid #bcbcbc;border-left:1px solid #d4d4d4;border-right:2px solid #cbcbcb"></div>
<div style="position:absolute;left:776px;top:721px;width:147px;height:1px;box-sizing:border-box;background:#fff"></div>
<div style="position:absolute;left:775px;top:723px;width:150px;height:1px;box-sizing:border-box;background:#d3d3d3"></div>
<div style="position:absolute;left:907px;top:705px;width:1px;height:17px;box-sizing:border-box;background:#e4e4e4"></div>
<svg style="position:absolute;left:910px;top:711px" width="10" height="6" viewBox="0 0 10 6"><path d="M1 1 L5 5 L9 1" fill="none" stroke="#4e4e4e" stroke-width="1.1"/></svg>
<div class="t" style="left:26.3px;top:708.14px;font-size:12px;line-height:12px;color:#777777;font-weight:normal;transform:scaleX(0.88);">Contract Charge</div>
<div class="t" style="left:166.9px;top:708.14px;font-size:12px;line-height:12px;color:#777777;font-weight:normal;transform:scaleX(0.874);word-spacing:0.66px">7.137.13 Regression&nbsp; - XX: partial</div>
<div class="t" style="right:332.20000000000005px;top:707.44px;font-size:12px;line-height:12px;color:#777777;font-weight:normal;transform:scaleX(0.88);transform-origin:right top;">20</div>
<div class="t" style="right:237px;top:707.44px;font-size:12px;line-height:12px;color:#777777;font-weight:normal;transform:scaleX(0.9);transform-origin:right top;">$0.00</div>
<div style="position:absolute;left:661px;top:705px;width:17px;height:17px;box-sizing:border-box;border:1px solid #cbcbcb;border-radius:4px;background:#fdfdfd"><div style="position:absolute;left:-1px;top:-1px;width:17px;height:17px"><svg width="17" height="17" viewBox="0 0 17 17" style="position:absolute;left:0;top:0" shape-rendering="crispEdges"><rect x="6" y="5" width="3" height="1"/><rect x="5" y="6" width="1" height="1"/><rect x="4" y="7" width="1" height="3"/><rect x="5" y="10" width="1" height="3"/><rect x="6" y="12" width="1" height="1"/><rect x="9" y="6" width="2" height="1"/><rect x="11" y="7" width="1" height="1"/><polygon points="10,11 15,11 15,6" shape-rendering="auto"/></svg></div></div>
<div style="position:absolute;left:756px;top:705px;width:17px;height:17px;box-sizing:border-box;border:1px solid #cbcbcb;border-radius:4px;background:#fdfdfd"><div style="position:absolute;left:-1px;top:-1px;width:17px;height:17px"><svg width="17" height="17" viewBox="0 0 17 17" style="position:absolute;left:0;top:0" shape-rendering="crispEdges"><rect x="6" y="5" width="3" height="1"/><rect x="5" y="6" width="1" height="1"/><rect x="4" y="7" width="1" height="3"/><rect x="5" y="10" width="1" height="3"/><rect x="6" y="12" width="1" height="1"/><rect x="9" y="6" width="2" height="1"/><rect x="11" y="7" width="1" height="1"/><polygon points="10,11 15,11 15,6" shape-rendering="auto"/></svg></div></div>
<div style="position:absolute;left:926px;top:705px;width:17px;height:17px;box-sizing:border-box;border:1px solid #d4d4d4;border-radius:4px;background:#fdfdfd"><svg width="17" height="17" viewBox="0 0 17 17" style="position:absolute;left:-1px;top:-1px"><path d="M5 13 C7 10 10 6 13 4.2" fill="none" stroke="#f00" stroke-width="2"/><path d="M5.5 4.5 C7.5 7 10 10 12 13" fill="none" stroke="#f00" stroke-width="2"/></svg></div>
</div>
<div style="position:absolute;left:16px;top:712px;width:957px;height:3px;box-sizing:border-box;background:#a4c2ec"></div>
<div style="position:absolute;left:22px;top:302px;width:942px;height:410px;box-sizing:border-box;border:3px solid #f9a559"></div>
<div style="position:absolute;left:401px;top:720px;width:77px;height:25px;box-sizing:border-box;border:3px solid #f9a559"></div>
<div style="position:absolute;left:404px;top:723px;width:71px;height:19px;box-sizing:border-box;background:#efefef;border:1px solid #fcfcfc;border-radius:4px"></div>
<div class="t" style="left:425px;top:726.84px;font-size:12px;line-height:12px;color:#000;font-weight:normal;transform:scaleX(0.875);">Save</div>
<div style="position:absolute;left:519px;top:722px;width:72px;height:21px;box-sizing:border-box;background:#efefef;border:1px solid #fcfcfc;box-shadow:0 0 0 0.5px #d8d8d8;border-radius:4px"></div>
<div class="t" style="left:537px;top:726.84px;font-size:12px;line-height:12px;color:#000;font-weight:normal;transform:scaleX(0.875);">Cancel</div>
</body></html>
